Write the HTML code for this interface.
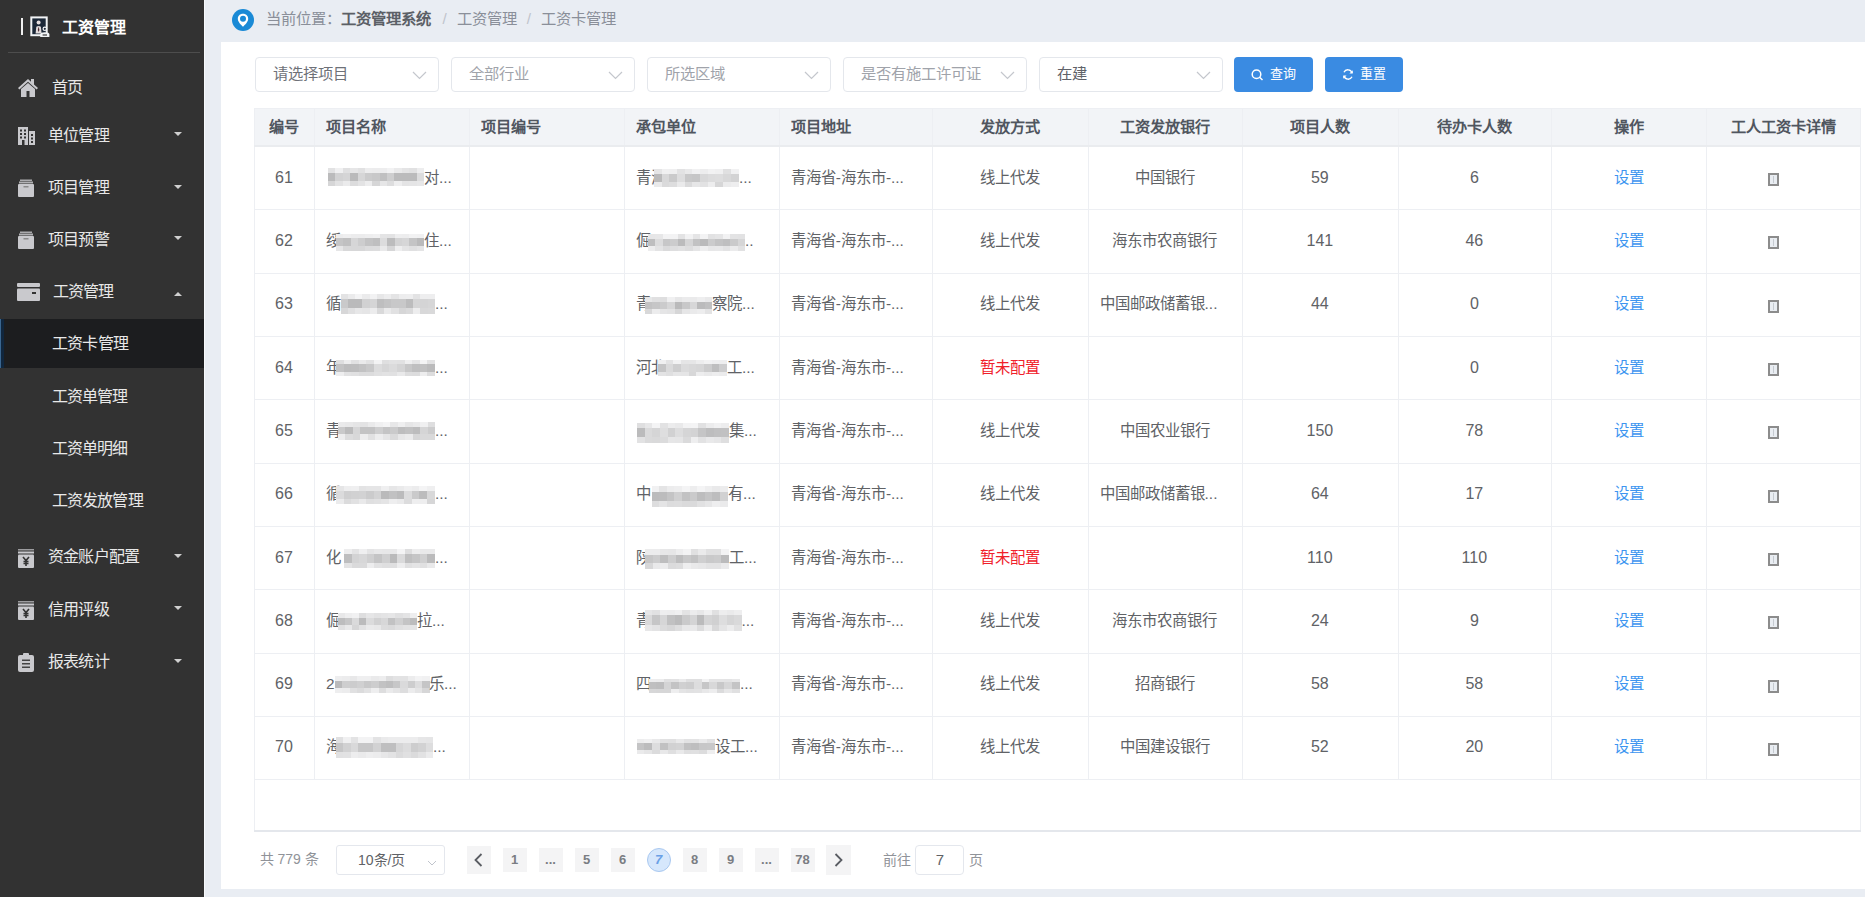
<!DOCTYPE html>
<html lang="zh-CN"><head><meta charset="utf-8"><style>
html,body{margin:0;padding:0}
body{width:1865px;height:897px;overflow:hidden;position:relative;background:#e9edf3;font-family:'Liberation Sans',sans-serif;}
b{font-weight:bold}
</style></head><body>
<div style="position:absolute;left:0;top:0;width:204px;height:897px;background:#323232"><div style="position:absolute;left:21px;top:18px;width:2px;height:17px;background:#f0f0f0"></div><svg style="position:absolute;left:30px;top:16px" width="21" height="21" viewBox="0 0 21 21">
<rect x="1.3" y="1.4" width="15.4" height="17.8" fill="#1c2838" stroke="#f2f4f6" stroke-width="2"/>
<circle cx="8.6" cy="6.6" r="2" fill="#e6dede"/>
<path d="M5.6 17.5 L6.3 10.8 Q8.6 9.2 10.9 10.8 L11.6 17.5 Z" fill="#e2dcdc"/>
<path d="M8.6 10.6 L9.4 14 L8.6 16 L7.8 14 Z" fill="#4a2a30"/>
<path d="M10.2 21 V18.6 Q10.2 16.2 14.8 16.2 Q19.4 16.2 19.4 18.6 V21 Z" fill="#f2f4f6"/>
<circle cx="14.8" cy="12.8" r="2.3" fill="#f2f4f6"/>
<circle cx="14.8" cy="12.8" r="1.1" fill="#1c2838"/>
<rect x="12.6" y="18.4" width="4.4" height="1.2" fill="#3a3a3a"/>
</svg><div style="position:absolute;left:62px;top:17px;height:22px;line-height:22px;font-size:16px;font-weight:bold;color:#fff">工资管理</div><div style="position:absolute;left:8px;top:52px;width:192px;height:1px;background:#4d4d4d"></div><div style="position:absolute;left:0;top:319.4px;width:204px;height:48.6px;background:#1c1d1f"></div><div style="position:absolute;left:0;top:319px;width:3.5px;height:49px;background:#10263d"></div><div style="position:absolute;left:0;top:319px;width:1.2px;height:49px;background:#3a6690"></div><div style="position:absolute;left:17px;top:78px;line-height:0"><svg width="22" height="20" viewBox="0 0 22 20"><path d="M1 10 L11 1 L14 3.7 L14 1 L17 1 L17 6.4 L21 10 L19.6 11.4 L11 3.8 L2.4 11.4 Z" fill="#c9c9cd"/><path d="M4 11 L11 5 L18 11 V19 H12.5 V13 H9.5 V19 H4 Z" fill="#c9c9cd"/></svg></div><div style="position:absolute;left:51.5px;top:77px;height:22px;line-height:22px;font-size:16px;letter-spacing:-0.8px;color:#e8e8e8;white-space:nowrap">首页</div><div style="position:absolute;left:18px;top:127px;line-height:0"><svg width="17" height="18" viewBox="0 0 17 18"><rect x="0" y="0" width="10" height="18" fill="#c9c9cd"/><rect x="11" y="4" width="6" height="14" fill="#c9c9cd"/><g fill="#333"><rect x="2" y="2.5" width="2" height="2"/><rect x="6" y="2.5" width="2" height="2"/><rect x="2" y="6" width="2" height="2"/><rect x="6" y="6" width="2" height="2"/><rect x="2" y="9.5" width="2" height="2"/><rect x="6" y="9.5" width="2" height="2"/><rect x="4" y="13" width="2.5" height="5"/><rect x="13" y="7" width="2" height="2"/><rect x="13" y="10.5" width="2" height="2"/><rect x="13" y="14" width="2" height="2"/></g></svg></div><div style="position:absolute;left:48px;top:124.5px;height:22px;line-height:22px;font-size:16px;letter-spacing:-0.8px;color:#e8e8e8;white-space:nowrap">单位管理</div><div style="position:absolute;left:174px;top:132.0px;width:0;height:0;border-left:4px solid transparent;border-right:4px solid transparent;border-top:4px solid #d0d0d0"></div><div style="position:absolute;left:17px;top:179px;line-height:0"><svg width="18" height="18" viewBox="0 0 18 18"><rect x="3" y="0.5" width="12" height="1.5" fill="#c9c9cd" opacity=".8"/><rect x="2" y="2.5" width="14" height="2" fill="#c9c9cd" opacity=".85"/><rect x="1" y="5" width="16" height="13" rx="1" fill="#c9c9cd"/><rect x="6.5" y="7" width="5" height="1.5" fill="#8a8a8a"/></svg></div><div style="position:absolute;left:48px;top:177px;height:22px;line-height:22px;font-size:16px;letter-spacing:-0.8px;color:#e8e8e8;white-space:nowrap">项目管理</div><div style="position:absolute;left:174px;top:184.5px;width:0;height:0;border-left:4px solid transparent;border-right:4px solid transparent;border-top:4px solid #d0d0d0"></div><div style="position:absolute;left:17px;top:231px;line-height:0"><svg width="18" height="18" viewBox="0 0 18 18"><rect x="3" y="0.5" width="12" height="1.5" fill="#c9c9cd" opacity=".8"/><rect x="2" y="2.5" width="14" height="2" fill="#c9c9cd" opacity=".85"/><rect x="1" y="5" width="16" height="13" rx="1" fill="#c9c9cd"/><rect x="6.5" y="7" width="5" height="1.5" fill="#8a8a8a"/></svg></div><div style="position:absolute;left:48px;top:228.7px;height:22px;line-height:22px;font-size:16px;letter-spacing:-0.8px;color:#e8e8e8;white-space:nowrap">项目预警</div><div style="position:absolute;left:174px;top:236.2px;width:0;height:0;border-left:4px solid transparent;border-right:4px solid transparent;border-top:4px solid #d0d0d0"></div><div style="position:absolute;left:17px;top:283px;line-height:0"><svg width="23" height="18" viewBox="0 0 23 18"><rect x="0" y="0" width="23" height="4" rx="1" fill="#c9c9cd"/><rect x="0" y="5.5" width="23" height="12.5" rx="1" fill="#c9c9cd"/><rect x="15" y="9" width="4" height="2" fill="#333"/></svg></div><div style="position:absolute;left:52.5px;top:281px;height:22px;line-height:22px;font-size:16px;letter-spacing:-0.8px;color:#e8e8e8;white-space:nowrap">工资管理</div><div style="position:absolute;left:174px;top:292px;width:0;height:0;border-left:4px solid transparent;border-right:4px solid transparent;border-bottom:4px solid #d0d0d0"></div><div style="position:absolute;left:52px;top:333px;height:22px;line-height:22px;font-size:16px;letter-spacing:-0.8px;color:#e8e8e8;white-space:nowrap">工资卡管理</div><div style="position:absolute;left:51.5px;top:385.5px;height:22px;line-height:22px;font-size:16px;letter-spacing:-0.8px;color:#e8e8e8;white-space:nowrap">工资单管理</div><div style="position:absolute;left:51.5px;top:437.5px;height:22px;line-height:22px;font-size:16px;letter-spacing:-0.8px;color:#e8e8e8;white-space:nowrap">工资单明细</div><div style="position:absolute;left:51.5px;top:490px;height:22px;line-height:22px;font-size:16px;letter-spacing:-0.8px;color:#e8e8e8;white-space:nowrap">工资发放管理</div><div style="position:absolute;left:17px;top:549px;line-height:0"><svg width="18" height="19" viewBox="0 0 18 19"><rect x="1" y="0" width="16" height="1.5" fill="#c9c9cd" opacity=".7"/><rect x="1" y="2.5" width="16" height="2" fill="#c9c9cd"/><rect x="1" y="5.5" width="16" height="13.5" rx="1" fill="#c9c9cd"/><path d="M6 8 L9 11.5 L12 8 M6.5 12.5 H11.5 M6.5 14.5 H11.5 M9 11.5 V17" stroke="#333" stroke-width="1.6" fill="none"/></svg></div><div style="position:absolute;left:48px;top:546px;height:22px;line-height:22px;font-size:16px;letter-spacing:-0.8px;color:#e8e8e8;white-space:nowrap">资金账户配置</div><div style="position:absolute;left:174px;top:553.5px;width:0;height:0;border-left:4px solid transparent;border-right:4px solid transparent;border-top:4px solid #d0d0d0"></div><div style="position:absolute;left:17px;top:601px;line-height:0"><svg width="18" height="19" viewBox="0 0 18 19"><rect x="1" y="0" width="16" height="1.5" fill="#c9c9cd" opacity=".7"/><rect x="1" y="2.5" width="16" height="2" fill="#c9c9cd"/><rect x="1" y="5.5" width="16" height="13.5" rx="1" fill="#c9c9cd"/><path d="M6 8 L9 11.5 L12 8 M6.5 12.5 H11.5 M6.5 14.5 H11.5 M9 11.5 V17" stroke="#333" stroke-width="1.6" fill="none"/></svg></div><div style="position:absolute;left:48px;top:598.7px;height:22px;line-height:22px;font-size:16px;letter-spacing:-0.8px;color:#e8e8e8;white-space:nowrap">信用评级</div><div style="position:absolute;left:174px;top:606.2px;width:0;height:0;border-left:4px solid transparent;border-right:4px solid transparent;border-top:4px solid #d0d0d0"></div><div style="position:absolute;left:18px;top:653px;line-height:0"><svg width="16" height="19" viewBox="0 0 16 19"><rect x="0" y="2" width="16" height="17" rx="2" fill="#c9c9cd"/><rect x="5" y="0" width="6" height="3" rx="1" fill="#c9c9cd"/><g fill="#444"><rect x="4" y="6.5" width="8" height="1.5"/><rect x="4" y="10" width="8" height="1.5"/><rect x="4" y="13.5" width="8" height="1.5"/></g></svg></div><div style="position:absolute;left:48px;top:651px;height:22px;line-height:22px;font-size:16px;letter-spacing:-0.8px;color:#e8e8e8;white-space:nowrap">报表统计</div><div style="position:absolute;left:174px;top:658.5px;width:0;height:0;border-left:4px solid transparent;border-right:4px solid transparent;border-top:4px solid #d0d0d0"></div></div><div style="position:absolute;left:204px;top:0;width:1px;height:897px;background:#f7f9fb"></div>
<svg style="position:absolute;left:232px;top:9px" width="22" height="22" viewBox="0 0 22 22">
<circle cx="11" cy="11" r="11" fill="#1a8ad6"/>
<path d="M11 4.8 C7.9 4.8 5.8 7 5.8 9.7 C5.8 12.8 9 15.6 11 17.8 C13 15.6 16.2 12.8 16.2 9.7 C16.2 7 14.1 4.8 11 4.8 Z" fill="#fff"/>
<circle cx="11" cy="9.7" r="3" fill="#1a8ad6"/></svg><div style="position:absolute;left:265.5px;top:8px;height:22px;line-height:22px;font-size:15.3px;color:#8a8f99;white-space:nowrap">当前位置：<b style="color:#5b5f66;font-weight:bold">工资管理系统</b><span style="color:#c0c4cc;margin:0 10px 0 12px">/</span>工资管理<span style="color:#c0c4cc;margin:0 10px 0 10px">/</span>工资卡管理</div>
<div style="position:absolute;left:221px;top:41.5px;width:1644px;height:847px;background:#fff"></div>
<div style="position:absolute;left:254.5px;top:56.5px;width:182px;height:33px;border:1px solid #e4e7ec;border-radius:4px;background:#fff"><div style="position:absolute;left:17px;top:5.5px;line-height:22px;font-size:15.3px;color:#6e7178;white-space:nowrap">请选择项目</div><svg style="position:absolute;left:156px;top:13px" width="15" height="9" viewBox="0 0 15 9"><path d="M1 1 L7.5 7.5 L14 1" stroke="#c4c7cd" stroke-width="1.2" fill="none"/></svg></div><div style="position:absolute;left:450.5px;top:56.5px;width:182px;height:33px;border:1px solid #e4e7ec;border-radius:4px;background:#fff"><div style="position:absolute;left:17px;top:5.5px;line-height:22px;font-size:15.3px;color:#a0a3aa;white-space:nowrap">全部行业</div><svg style="position:absolute;left:156px;top:13px" width="15" height="9" viewBox="0 0 15 9"><path d="M1 1 L7.5 7.5 L14 1" stroke="#c4c7cd" stroke-width="1.2" fill="none"/></svg></div><div style="position:absolute;left:646.5px;top:56.5px;width:182px;height:33px;border:1px solid #e4e7ec;border-radius:4px;background:#fff"><div style="position:absolute;left:17px;top:5.5px;line-height:22px;font-size:15.3px;color:#a0a3aa;white-space:nowrap">所选区域</div><svg style="position:absolute;left:156px;top:13px" width="15" height="9" viewBox="0 0 15 9"><path d="M1 1 L7.5 7.5 L14 1" stroke="#c4c7cd" stroke-width="1.2" fill="none"/></svg></div><div style="position:absolute;left:842.5px;top:56.5px;width:182px;height:33px;border:1px solid #e4e7ec;border-radius:4px;background:#fff"><div style="position:absolute;left:17px;top:5.5px;line-height:22px;font-size:15.3px;color:#a0a3aa;white-space:nowrap">是否有施工许可证</div><svg style="position:absolute;left:156px;top:13px" width="15" height="9" viewBox="0 0 15 9"><path d="M1 1 L7.5 7.5 L14 1" stroke="#c4c7cd" stroke-width="1.2" fill="none"/></svg></div><div style="position:absolute;left:1038.5px;top:56.5px;width:182px;height:33px;border:1px solid #e4e7ec;border-radius:4px;background:#fff"><div style="position:absolute;left:17px;top:5.5px;line-height:22px;font-size:15.3px;color:#5f6269;white-space:nowrap">在建</div><svg style="position:absolute;left:156px;top:13px" width="15" height="9" viewBox="0 0 15 9"><path d="M1 1 L7.5 7.5 L14 1" stroke="#c4c7cd" stroke-width="1.2" fill="none"/></svg></div>
<div style="position:absolute;left:1234.3px;top:56.8px;width:78.7px;height:34.8px;border-radius:4px;background:#3a8be2"><svg style="position:absolute;left:17px;top:12.5px" width="13" height="12" viewBox="0 0 13 12"><circle cx="5.5" cy="5.2" r="4.3" stroke="#fff" stroke-width="1.5" fill="none"/><path d="M8.6 8.3 L11.5 11" stroke="#fff" stroke-width="1.5"/></svg><div style="position:absolute;left:36px;top:6px;line-height:22px;font-size:13px;color:#fff;white-space:nowrap">查询</div></div><div style="position:absolute;left:1324.6px;top:56.8px;width:78.2px;height:34.8px;border-radius:4px;background:#3a8be2"><svg style="position:absolute;left:17.5px;top:12.5px" width="12" height="11" viewBox="0 0 12 11"><path d="M10 4 A4.3 4.3 0 0 0 2 3.2 M2 7 A4.3 4.3 0 0 0 10 7.8" stroke="#fff" stroke-width="1.4" fill="none"/><path d="M10.8 1.2 V4.6 H7.4 Z M1.2 9.8 V6.4 H4.6 Z" fill="#fff"/></svg><div style="position:absolute;left:35px;top:6px;line-height:22px;font-size:13px;color:#fff;white-space:nowrap">重置</div></div>
<div style="position:absolute;left:254px;top:107.5px;width:1606px;height:37.099999999999994px;background:#f2f4f7"></div><div style="position:absolute;left:254px;top:107.5px;width:1606px;height:1px;background:#edeff3"></div><div style="position:absolute;left:254px;top:830px;width:1607px;height:1.5px;background:#e4e7ec"></div><div style="position:absolute;left:254px;top:107.5px;width:1px;height:722.5px;background:#edeff3"></div><div style="position:absolute;left:314px;top:107.5px;width:1px;height:671.6px;background:#edeff3"></div><div style="position:absolute;left:468.5px;top:107.5px;width:1px;height:671.6px;background:#edeff3"></div><div style="position:absolute;left:624px;top:107.5px;width:1px;height:671.6px;background:#edeff3"></div><div style="position:absolute;left:778.8px;top:107.5px;width:1px;height:671.6px;background:#edeff3"></div><div style="position:absolute;left:932px;top:107.5px;width:1px;height:671.6px;background:#edeff3"></div><div style="position:absolute;left:1087.6px;top:107.5px;width:1px;height:671.6px;background:#edeff3"></div><div style="position:absolute;left:1242px;top:107.5px;width:1px;height:671.6px;background:#edeff3"></div><div style="position:absolute;left:1397.7px;top:107.5px;width:1px;height:671.6px;background:#edeff3"></div><div style="position:absolute;left:1551px;top:107.5px;width:1px;height:671.6px;background:#edeff3"></div><div style="position:absolute;left:1706px;top:107.5px;width:1px;height:671.6px;background:#edeff3"></div><div style="position:absolute;left:1860px;top:107.5px;width:1px;height:722.5px;background:#edeff3"></div><div style="position:absolute;left:254px;top:144.6px;width:1606px;height:2px;background:#eaecef"></div><div style="position:absolute;left:254px;top:209.39999999999998px;width:1606px;height:1px;background:#edeff3"></div><div style="position:absolute;left:254px;top:272.7px;width:1606px;height:1px;background:#edeff3"></div><div style="position:absolute;left:254px;top:336.0px;width:1606px;height:1px;background:#edeff3"></div><div style="position:absolute;left:254px;top:399.29999999999995px;width:1606px;height:1px;background:#edeff3"></div><div style="position:absolute;left:254px;top:462.6px;width:1606px;height:1px;background:#edeff3"></div><div style="position:absolute;left:254px;top:525.9px;width:1606px;height:1px;background:#edeff3"></div><div style="position:absolute;left:254px;top:589.1999999999999px;width:1606px;height:1px;background:#edeff3"></div><div style="position:absolute;left:254px;top:652.5px;width:1606px;height:1px;background:#edeff3"></div><div style="position:absolute;left:254px;top:715.8px;width:1606px;height:1px;background:#edeff3"></div><div style="position:absolute;left:254px;top:779.1px;width:1606px;height:1px;background:#edeff3"></div><div style="position:absolute;left:254px;width:60px;text-align:center;top:115.8px;height:22px;line-height:22px;font-size:15.2px;color:#50565f;white-space:nowrap;font-weight:bold;">编号</div><div style="position:absolute;left:326px;width:142.5px;text-align:left;top:115.8px;height:22px;line-height:22px;font-size:15.2px;color:#50565f;white-space:nowrap;font-weight:bold;">项目名称</div><div style="position:absolute;left:480.5px;width:143.5px;text-align:left;top:115.8px;height:22px;line-height:22px;font-size:15.2px;color:#50565f;white-space:nowrap;font-weight:bold;">项目编号</div><div style="position:absolute;left:636px;width:142.79999999999995px;text-align:left;top:115.8px;height:22px;line-height:22px;font-size:15.2px;color:#50565f;white-space:nowrap;font-weight:bold;">承包单位</div><div style="position:absolute;left:790.8px;width:141.20000000000005px;text-align:left;top:115.8px;height:22px;line-height:22px;font-size:15.2px;color:#50565f;white-space:nowrap;font-weight:bold;">项目地址</div><div style="position:absolute;left:932px;width:155.5999999999999px;text-align:center;top:115.8px;height:22px;line-height:22px;font-size:15.2px;color:#50565f;white-space:nowrap;font-weight:bold;">发放方式</div><div style="position:absolute;left:1087.6px;width:154.4000000000001px;text-align:center;top:115.8px;height:22px;line-height:22px;font-size:15.2px;color:#50565f;white-space:nowrap;font-weight:bold;">工资发放银行</div><div style="position:absolute;left:1242px;width:155.70000000000005px;text-align:center;top:115.8px;height:22px;line-height:22px;font-size:15.2px;color:#50565f;white-space:nowrap;font-weight:bold;">项目人数</div><div style="position:absolute;left:1397.7px;width:153.29999999999995px;text-align:center;top:115.8px;height:22px;line-height:22px;font-size:15.2px;color:#50565f;white-space:nowrap;font-weight:bold;">待办卡人数</div><div style="position:absolute;left:1551px;width:155px;text-align:center;top:115.8px;height:22px;line-height:22px;font-size:15.2px;color:#50565f;white-space:nowrap;font-weight:bold;">操作</div><div style="position:absolute;left:1706px;width:154px;text-align:center;top:115.8px;height:22px;line-height:22px;font-size:15.2px;color:#50565f;white-space:nowrap;font-weight:bold;">工人工资卡详情</div><div style="position:absolute;left:254px;width:60px;text-align:center;top:166.75px;height:22px;line-height:22px;font-size:16px;color:#606266;white-space:nowrap;">61</div><div style="position:absolute;left:328.00px;top:167.50px;width:7.68px;height:5.48px;background:rgb(226,226,227)"></div><div style="position:absolute;left:335.38px;top:167.50px;width:7.68px;height:5.48px;background:rgb(240,240,241)"></div><div style="position:absolute;left:342.77px;top:167.50px;width:7.68px;height:5.48px;background:rgb(224,224,225)"></div><div style="position:absolute;left:350.15px;top:167.50px;width:7.68px;height:5.48px;background:rgb(230,230,231)"></div><div style="position:absolute;left:357.54px;top:167.50px;width:7.68px;height:5.48px;background:rgb(225,225,226)"></div><div style="position:absolute;left:364.92px;top:167.50px;width:7.68px;height:5.48px;background:rgb(237,237,238)"></div><div style="position:absolute;left:372.31px;top:167.50px;width:7.68px;height:5.48px;background:rgb(236,236,237)"></div><div style="position:absolute;left:379.69px;top:167.50px;width:7.68px;height:5.48px;background:rgb(237,237,238)"></div><div style="position:absolute;left:387.08px;top:167.50px;width:7.68px;height:5.48px;background:rgb(242,242,243)"></div><div style="position:absolute;left:394.46px;top:167.50px;width:7.68px;height:5.48px;background:rgb(234,234,235)"></div><div style="position:absolute;left:401.85px;top:167.50px;width:7.68px;height:5.48px;background:rgb(228,228,229)"></div><div style="position:absolute;left:409.23px;top:167.50px;width:7.68px;height:5.48px;background:rgb(225,225,226)"></div><div style="position:absolute;left:416.62px;top:167.50px;width:7.68px;height:5.48px;background:rgb(237,237,238)"></div><div style="position:absolute;left:328.00px;top:172.68px;width:7.68px;height:8.44px;background:rgb(187,187,188)"></div><div style="position:absolute;left:335.38px;top:172.68px;width:7.68px;height:8.44px;background:rgb(210,210,211)"></div><div style="position:absolute;left:342.77px;top:172.68px;width:7.68px;height:8.44px;background:rgb(213,213,214)"></div><div style="position:absolute;left:350.15px;top:172.68px;width:7.68px;height:8.44px;background:rgb(186,186,187)"></div><div style="position:absolute;left:357.54px;top:172.68px;width:7.68px;height:8.44px;background:rgb(214,214,215)"></div><div style="position:absolute;left:364.92px;top:172.68px;width:7.68px;height:8.44px;background:rgb(203,203,204)"></div><div style="position:absolute;left:372.31px;top:172.68px;width:7.68px;height:8.44px;background:rgb(200,200,201)"></div><div style="position:absolute;left:379.69px;top:172.68px;width:7.68px;height:8.44px;background:rgb(192,192,193)"></div><div style="position:absolute;left:387.08px;top:172.68px;width:7.68px;height:8.44px;background:rgb(206,206,207)"></div><div style="position:absolute;left:394.46px;top:172.68px;width:7.68px;height:8.44px;background:rgb(187,187,188)"></div><div style="position:absolute;left:401.85px;top:172.68px;width:7.68px;height:8.44px;background:rgb(187,187,188)"></div><div style="position:absolute;left:409.23px;top:172.68px;width:7.68px;height:8.44px;background:rgb(187,187,188)"></div><div style="position:absolute;left:416.62px;top:172.68px;width:7.68px;height:8.44px;background:rgb(220,220,221)"></div><div style="position:absolute;left:328.00px;top:180.82px;width:7.68px;height:5.48px;background:rgb(214,214,215)"></div><div style="position:absolute;left:335.38px;top:180.82px;width:7.68px;height:5.48px;background:rgb(226,226,227)"></div><div style="position:absolute;left:342.77px;top:180.82px;width:7.68px;height:5.48px;background:rgb(235,235,236)"></div><div style="position:absolute;left:350.15px;top:180.82px;width:7.68px;height:5.48px;background:rgb(220,220,221)"></div><div style="position:absolute;left:357.54px;top:180.82px;width:7.68px;height:5.48px;background:rgb(227,227,228)"></div><div style="position:absolute;left:364.92px;top:180.82px;width:7.68px;height:5.48px;background:rgb(237,237,238)"></div><div style="position:absolute;left:372.31px;top:180.82px;width:7.68px;height:5.48px;background:rgb(214,214,215)"></div><div style="position:absolute;left:379.69px;top:180.82px;width:7.68px;height:5.48px;background:rgb(230,230,231)"></div><div style="position:absolute;left:387.08px;top:180.82px;width:7.68px;height:5.48px;background:rgb(221,221,222)"></div><div style="position:absolute;left:394.46px;top:180.82px;width:7.68px;height:5.48px;background:rgb(238,238,239)"></div><div style="position:absolute;left:401.85px;top:180.82px;width:7.68px;height:5.48px;background:rgb(228,228,229)"></div><div style="position:absolute;left:409.23px;top:180.82px;width:7.68px;height:5.48px;background:rgb(229,229,230)"></div><div style="position:absolute;left:416.62px;top:180.82px;width:7.68px;height:5.48px;background:rgb(231,231,232)"></div><div style="position:absolute;left:424px;top:166.75px;height:22px;line-height:22px;font-size:15.4px;color:#606266;white-space:nowrap">对...</div><div style="position:absolute;left:636px;top:166.75px;height:22px;line-height:22px;font-size:15.4px;color:#606266;white-space:nowrap">青海</div><div style="position:absolute;left:654.00px;top:169.00px;width:7.98px;height:5.20px;background:rgb(229,229,230)"></div><div style="position:absolute;left:661.68px;top:169.00px;width:7.98px;height:5.20px;background:rgb(240,240,241)"></div><div style="position:absolute;left:669.36px;top:169.00px;width:7.98px;height:5.20px;background:rgb(239,239,240)"></div><div style="position:absolute;left:677.05px;top:169.00px;width:7.98px;height:5.20px;background:rgb(226,226,227)"></div><div style="position:absolute;left:684.73px;top:169.00px;width:7.98px;height:5.20px;background:rgb(233,233,234)"></div><div style="position:absolute;left:692.41px;top:169.00px;width:7.98px;height:5.20px;background:rgb(241,241,242)"></div><div style="position:absolute;left:700.09px;top:169.00px;width:7.98px;height:5.20px;background:rgb(237,237,238)"></div><div style="position:absolute;left:707.77px;top:169.00px;width:7.98px;height:5.20px;background:rgb(242,242,243)"></div><div style="position:absolute;left:715.45px;top:169.00px;width:7.98px;height:5.20px;background:rgb(240,240,241)"></div><div style="position:absolute;left:723.14px;top:169.00px;width:7.98px;height:5.20px;background:rgb(224,224,225)"></div><div style="position:absolute;left:730.82px;top:169.00px;width:7.98px;height:5.20px;background:rgb(241,241,242)"></div><div style="position:absolute;left:654.00px;top:173.90px;width:7.98px;height:8.00px;background:rgb(186,186,187)"></div><div style="position:absolute;left:661.68px;top:173.90px;width:7.98px;height:8.00px;background:rgb(216,216,217)"></div><div style="position:absolute;left:669.36px;top:173.90px;width:7.98px;height:8.00px;background:rgb(202,202,203)"></div><div style="position:absolute;left:677.05px;top:173.90px;width:7.98px;height:8.00px;background:rgb(221,221,222)"></div><div style="position:absolute;left:684.73px;top:173.90px;width:7.98px;height:8.00px;background:rgb(200,200,201)"></div><div style="position:absolute;left:692.41px;top:173.90px;width:7.98px;height:8.00px;background:rgb(198,198,199)"></div><div style="position:absolute;left:700.09px;top:173.90px;width:7.98px;height:8.00px;background:rgb(216,216,217)"></div><div style="position:absolute;left:707.77px;top:173.90px;width:7.98px;height:8.00px;background:rgb(220,220,221)"></div><div style="position:absolute;left:715.45px;top:173.90px;width:7.98px;height:8.00px;background:rgb(221,221,222)"></div><div style="position:absolute;left:723.14px;top:173.90px;width:7.98px;height:8.00px;background:rgb(216,216,217)"></div><div style="position:absolute;left:730.82px;top:173.90px;width:7.98px;height:8.00px;background:rgb(211,211,212)"></div><div style="position:absolute;left:654.00px;top:181.60px;width:7.98px;height:5.20px;background:rgb(234,234,235)"></div><div style="position:absolute;left:661.68px;top:181.60px;width:7.98px;height:5.20px;background:rgb(218,218,219)"></div><div style="position:absolute;left:669.36px;top:181.60px;width:7.98px;height:5.20px;background:rgb(221,221,222)"></div><div style="position:absolute;left:677.05px;top:181.60px;width:7.98px;height:5.20px;background:rgb(234,234,235)"></div><div style="position:absolute;left:684.73px;top:181.60px;width:7.98px;height:5.20px;background:rgb(218,218,219)"></div><div style="position:absolute;left:692.41px;top:181.60px;width:7.98px;height:5.20px;background:rgb(230,230,231)"></div><div style="position:absolute;left:700.09px;top:181.60px;width:7.98px;height:5.20px;background:rgb(226,226,227)"></div><div style="position:absolute;left:707.77px;top:181.60px;width:7.98px;height:5.20px;background:rgb(237,237,238)"></div><div style="position:absolute;left:715.45px;top:181.60px;width:7.98px;height:5.20px;background:rgb(214,214,215)"></div><div style="position:absolute;left:723.14px;top:181.60px;width:7.98px;height:5.20px;background:rgb(235,235,236)"></div><div style="position:absolute;left:730.82px;top:181.60px;width:7.98px;height:5.20px;background:rgb(238,238,239)"></div><div style="position:absolute;left:739px;top:166.75px;height:22px;line-height:22px;font-size:15.4px;color:#606266;white-space:nowrap">...</div><div style="position:absolute;left:790.8px;width:141.20000000000005px;text-align:left;top:166.75px;height:22px;line-height:22px;font-size:15.4px;color:#606266;white-space:nowrap;">青海省-海东市-...</div><div style="position:absolute;left:932px;width:155.5999999999999px;text-align:center;top:166.75px;height:22px;line-height:22px;font-size:15.4px;color:#606266;white-space:nowrap;">线上代发</div><div style="position:absolute;left:1087.6px;width:154.4000000000001px;text-align:center;top:166.75px;height:22px;line-height:22px;font-size:15.4px;color:#606266;white-space:nowrap;">中国银行</div><div style="position:absolute;left:1242px;width:155.70000000000005px;text-align:center;top:166.75px;height:22px;line-height:22px;font-size:16px;color:#606266;white-space:nowrap;">59</div><div style="position:absolute;left:1397.7px;width:153.29999999999995px;text-align:center;top:166.75px;height:22px;line-height:22px;font-size:16px;color:#606266;white-space:nowrap;">6</div><div style="position:absolute;left:1551px;width:155px;text-align:center;top:166.75px;height:22px;line-height:22px;font-size:15.4px;color:#3d95f0;white-space:nowrap;">设置</div><div style="position:absolute;left:1767.9px;top:173.15px;width:7px;height:9px;border:2px solid #8c8c8c;background:#e9edf2"><div style="position:absolute;left:3px;top:1px;width:1px;height:7px;background:#c5cad0"></div></div><div style="position:absolute;left:254px;width:60px;text-align:center;top:230.04999999999998px;height:22px;line-height:22px;font-size:16px;color:#606266;white-space:nowrap;">62</div><div style="position:absolute;left:326px;top:230.04999999999998px;height:22px;line-height:22px;font-size:15.4px;color:#606266;white-space:nowrap">绥</div><div style="position:absolute;left:336.00px;top:233.50px;width:7.63px;height:5.20px;background:rgb(236,236,237)"></div><div style="position:absolute;left:343.33px;top:233.50px;width:7.63px;height:5.20px;background:rgb(239,239,240)"></div><div style="position:absolute;left:350.67px;top:233.50px;width:7.63px;height:5.20px;background:rgb(236,236,237)"></div><div style="position:absolute;left:358.00px;top:233.50px;width:7.63px;height:5.20px;background:rgb(236,236,237)"></div><div style="position:absolute;left:365.33px;top:233.50px;width:7.63px;height:5.20px;background:rgb(238,238,239)"></div><div style="position:absolute;left:372.67px;top:233.50px;width:7.63px;height:5.20px;background:rgb(240,240,241)"></div><div style="position:absolute;left:380.00px;top:233.50px;width:7.63px;height:5.20px;background:rgb(228,228,229)"></div><div style="position:absolute;left:387.33px;top:233.50px;width:7.63px;height:5.20px;background:rgb(227,227,228)"></div><div style="position:absolute;left:394.67px;top:233.50px;width:7.63px;height:5.20px;background:rgb(238,238,239)"></div><div style="position:absolute;left:402.00px;top:233.50px;width:7.63px;height:5.20px;background:rgb(237,237,238)"></div><div style="position:absolute;left:409.33px;top:233.50px;width:7.63px;height:5.20px;background:rgb(242,242,243)"></div><div style="position:absolute;left:416.67px;top:233.50px;width:7.63px;height:5.20px;background:rgb(241,241,242)"></div><div style="position:absolute;left:336.00px;top:238.40px;width:7.63px;height:8.00px;background:rgb(197,197,198)"></div><div style="position:absolute;left:343.33px;top:238.40px;width:7.63px;height:8.00px;background:rgb(192,192,193)"></div><div style="position:absolute;left:350.67px;top:238.40px;width:7.63px;height:8.00px;background:rgb(214,214,215)"></div><div style="position:absolute;left:358.00px;top:238.40px;width:7.63px;height:8.00px;background:rgb(205,205,206)"></div><div style="position:absolute;left:365.33px;top:238.40px;width:7.63px;height:8.00px;background:rgb(195,195,196)"></div><div style="position:absolute;left:372.67px;top:238.40px;width:7.63px;height:8.00px;background:rgb(191,191,192)"></div><div style="position:absolute;left:380.00px;top:238.40px;width:7.63px;height:8.00px;background:rgb(220,220,221)"></div><div style="position:absolute;left:387.33px;top:238.40px;width:7.63px;height:8.00px;background:rgb(188,188,189)"></div><div style="position:absolute;left:394.67px;top:238.40px;width:7.63px;height:8.00px;background:rgb(211,211,212)"></div><div style="position:absolute;left:402.00px;top:238.40px;width:7.63px;height:8.00px;background:rgb(214,214,215)"></div><div style="position:absolute;left:409.33px;top:238.40px;width:7.63px;height:8.00px;background:rgb(196,196,197)"></div><div style="position:absolute;left:416.67px;top:238.40px;width:7.63px;height:8.00px;background:rgb(186,186,187)"></div><div style="position:absolute;left:336.00px;top:246.10px;width:7.63px;height:5.20px;background:rgb(230,230,231)"></div><div style="position:absolute;left:343.33px;top:246.10px;width:7.63px;height:5.20px;background:rgb(216,216,217)"></div><div style="position:absolute;left:350.67px;top:246.10px;width:7.63px;height:5.20px;background:rgb(215,215,216)"></div><div style="position:absolute;left:358.00px;top:246.10px;width:7.63px;height:5.20px;background:rgb(215,215,216)"></div><div style="position:absolute;left:365.33px;top:246.10px;width:7.63px;height:5.20px;background:rgb(220,220,221)"></div><div style="position:absolute;left:372.67px;top:246.10px;width:7.63px;height:5.20px;background:rgb(221,221,222)"></div><div style="position:absolute;left:380.00px;top:246.10px;width:7.63px;height:5.20px;background:rgb(233,233,234)"></div><div style="position:absolute;left:387.33px;top:246.10px;width:7.63px;height:5.20px;background:rgb(214,214,215)"></div><div style="position:absolute;left:394.67px;top:246.10px;width:7.63px;height:5.20px;background:rgb(238,238,239)"></div><div style="position:absolute;left:402.00px;top:246.10px;width:7.63px;height:5.20px;background:rgb(228,228,229)"></div><div style="position:absolute;left:409.33px;top:246.10px;width:7.63px;height:5.20px;background:rgb(224,224,225)"></div><div style="position:absolute;left:416.67px;top:246.10px;width:7.63px;height:5.20px;background:rgb(228,228,229)"></div><div style="position:absolute;left:424px;top:230.04999999999998px;height:22px;line-height:22px;font-size:15.4px;color:#606266;white-space:nowrap">住...</div><div style="position:absolute;left:636px;top:230.04999999999998px;height:22px;line-height:22px;font-size:15.4px;color:#606266;white-space:nowrap">倔</div><div style="position:absolute;left:647.50px;top:234.00px;width:7.80px;height:5.06px;background:rgb(230,230,231)"></div><div style="position:absolute;left:655.00px;top:234.00px;width:7.80px;height:5.06px;background:rgb(231,231,232)"></div><div style="position:absolute;left:662.50px;top:234.00px;width:7.80px;height:5.06px;background:rgb(243,243,244)"></div><div style="position:absolute;left:670.00px;top:234.00px;width:7.80px;height:5.06px;background:rgb(243,243,244)"></div><div style="position:absolute;left:677.50px;top:234.00px;width:7.80px;height:5.06px;background:rgb(227,227,228)"></div><div style="position:absolute;left:685.00px;top:234.00px;width:7.80px;height:5.06px;background:rgb(242,242,243)"></div><div style="position:absolute;left:692.50px;top:234.00px;width:7.80px;height:5.06px;background:rgb(229,229,230)"></div><div style="position:absolute;left:700.00px;top:234.00px;width:7.80px;height:5.06px;background:rgb(243,243,244)"></div><div style="position:absolute;left:707.50px;top:234.00px;width:7.80px;height:5.06px;background:rgb(226,226,227)"></div><div style="position:absolute;left:715.00px;top:234.00px;width:7.80px;height:5.06px;background:rgb(229,229,230)"></div><div style="position:absolute;left:722.50px;top:234.00px;width:7.80px;height:5.06px;background:rgb(242,242,243)"></div><div style="position:absolute;left:730.00px;top:234.00px;width:7.80px;height:5.06px;background:rgb(227,227,228)"></div><div style="position:absolute;left:737.50px;top:234.00px;width:7.80px;height:5.06px;background:rgb(226,226,227)"></div><div style="position:absolute;left:647.50px;top:238.76px;width:7.80px;height:7.78px;background:rgb(190,190,191)"></div><div style="position:absolute;left:655.00px;top:238.76px;width:7.80px;height:7.78px;background:rgb(220,220,221)"></div><div style="position:absolute;left:662.50px;top:238.76px;width:7.80px;height:7.78px;background:rgb(199,199,200)"></div><div style="position:absolute;left:670.00px;top:238.76px;width:7.80px;height:7.78px;background:rgb(204,204,205)"></div><div style="position:absolute;left:677.50px;top:238.76px;width:7.80px;height:7.78px;background:rgb(187,187,188)"></div><div style="position:absolute;left:685.00px;top:238.76px;width:7.80px;height:7.78px;background:rgb(213,213,214)"></div><div style="position:absolute;left:692.50px;top:238.76px;width:7.80px;height:7.78px;background:rgb(194,194,195)"></div><div style="position:absolute;left:700.00px;top:238.76px;width:7.80px;height:7.78px;background:rgb(186,186,187)"></div><div style="position:absolute;left:707.50px;top:238.76px;width:7.80px;height:7.78px;background:rgb(203,203,204)"></div><div style="position:absolute;left:715.00px;top:238.76px;width:7.80px;height:7.78px;background:rgb(195,195,196)"></div><div style="position:absolute;left:722.50px;top:238.76px;width:7.80px;height:7.78px;background:rgb(191,191,192)"></div><div style="position:absolute;left:730.00px;top:238.76px;width:7.80px;height:7.78px;background:rgb(202,202,203)"></div><div style="position:absolute;left:737.50px;top:238.76px;width:7.80px;height:7.78px;background:rgb(214,214,215)"></div><div style="position:absolute;left:647.50px;top:246.24px;width:7.80px;height:5.06px;background:rgb(237,237,238)"></div><div style="position:absolute;left:655.00px;top:246.24px;width:7.80px;height:5.06px;background:rgb(227,227,228)"></div><div style="position:absolute;left:662.50px;top:246.24px;width:7.80px;height:5.06px;background:rgb(218,218,219)"></div><div style="position:absolute;left:670.00px;top:246.24px;width:7.80px;height:5.06px;background:rgb(222,222,223)"></div><div style="position:absolute;left:677.50px;top:246.24px;width:7.80px;height:5.06px;background:rgb(225,225,226)"></div><div style="position:absolute;left:685.00px;top:246.24px;width:7.80px;height:5.06px;background:rgb(221,221,222)"></div><div style="position:absolute;left:692.50px;top:246.24px;width:7.80px;height:5.06px;background:rgb(229,229,230)"></div><div style="position:absolute;left:700.00px;top:246.24px;width:7.80px;height:5.06px;background:rgb(238,238,239)"></div><div style="position:absolute;left:707.50px;top:246.24px;width:7.80px;height:5.06px;background:rgb(231,231,232)"></div><div style="position:absolute;left:715.00px;top:246.24px;width:7.80px;height:5.06px;background:rgb(232,232,233)"></div><div style="position:absolute;left:722.50px;top:246.24px;width:7.80px;height:5.06px;background:rgb(227,227,228)"></div><div style="position:absolute;left:730.00px;top:246.24px;width:7.80px;height:5.06px;background:rgb(235,235,236)"></div><div style="position:absolute;left:737.50px;top:246.24px;width:7.80px;height:5.06px;background:rgb(225,225,226)"></div><div style="position:absolute;left:745px;top:230.04999999999998px;height:22px;line-height:22px;font-size:15.4px;color:#606266;white-space:nowrap">..</div><div style="position:absolute;left:790.8px;width:141.20000000000005px;text-align:left;top:230.04999999999998px;height:22px;line-height:22px;font-size:15.4px;color:#606266;white-space:nowrap;">青海省-海东市-...</div><div style="position:absolute;left:932px;width:155.5999999999999px;text-align:center;top:230.04999999999998px;height:22px;line-height:22px;font-size:15.4px;color:#606266;white-space:nowrap;">线上代发</div><div style="position:absolute;left:1087.6px;width:154.4000000000001px;text-align:center;top:230.04999999999998px;height:22px;line-height:22px;font-size:15.4px;color:#606266;white-space:nowrap;">海东市农商银行</div><div style="position:absolute;left:1242px;width:155.70000000000005px;text-align:center;top:230.04999999999998px;height:22px;line-height:22px;font-size:16px;color:#606266;white-space:nowrap;">141</div><div style="position:absolute;left:1397.7px;width:153.29999999999995px;text-align:center;top:230.04999999999998px;height:22px;line-height:22px;font-size:16px;color:#606266;white-space:nowrap;">46</div><div style="position:absolute;left:1551px;width:155px;text-align:center;top:230.04999999999998px;height:22px;line-height:22px;font-size:15.4px;color:#3d95f0;white-space:nowrap;">设置</div><div style="position:absolute;left:1767.9px;top:236.45px;width:7px;height:9px;border:2px solid #8c8c8c;background:#e9edf2"><div style="position:absolute;left:3px;top:1px;width:1px;height:7px;background:#c5cad0"></div></div><div style="position:absolute;left:254px;width:60px;text-align:center;top:293.34999999999997px;height:22px;line-height:22px;font-size:16px;color:#606266;white-space:nowrap;">63</div><div style="position:absolute;left:326px;top:293.34999999999997px;height:22px;line-height:22px;font-size:15.4px;color:#606266;white-space:nowrap">循</div><div style="position:absolute;left:340.50px;top:293.50px;width:7.57px;height:6.04px;background:rgb(227,227,228)"></div><div style="position:absolute;left:347.77px;top:293.50px;width:7.57px;height:6.04px;background:rgb(235,235,236)"></div><div style="position:absolute;left:355.04px;top:293.50px;width:7.57px;height:6.04px;background:rgb(244,244,245)"></div><div style="position:absolute;left:362.31px;top:293.50px;width:7.57px;height:6.04px;background:rgb(235,235,236)"></div><div style="position:absolute;left:369.58px;top:293.50px;width:7.57px;height:6.04px;background:rgb(242,242,243)"></div><div style="position:absolute;left:376.85px;top:293.50px;width:7.57px;height:6.04px;background:rgb(231,231,232)"></div><div style="position:absolute;left:384.12px;top:293.50px;width:7.57px;height:6.04px;background:rgb(237,237,238)"></div><div style="position:absolute;left:391.38px;top:293.50px;width:7.57px;height:6.04px;background:rgb(228,228,229)"></div><div style="position:absolute;left:398.65px;top:293.50px;width:7.57px;height:6.04px;background:rgb(237,237,238)"></div><div style="position:absolute;left:405.92px;top:293.50px;width:7.57px;height:6.04px;background:rgb(238,238,239)"></div><div style="position:absolute;left:413.19px;top:293.50px;width:7.57px;height:6.04px;background:rgb(227,227,228)"></div><div style="position:absolute;left:420.46px;top:293.50px;width:7.57px;height:6.04px;background:rgb(238,238,239)"></div><div style="position:absolute;left:427.73px;top:293.50px;width:7.57px;height:6.04px;background:rgb(238,238,239)"></div><div style="position:absolute;left:340.50px;top:299.24px;width:7.57px;height:9.32px;background:rgb(201,201,202)"></div><div style="position:absolute;left:347.77px;top:299.24px;width:7.57px;height:9.32px;background:rgb(186,186,187)"></div><div style="position:absolute;left:355.04px;top:299.24px;width:7.57px;height:9.32px;background:rgb(186,186,187)"></div><div style="position:absolute;left:362.31px;top:299.24px;width:7.57px;height:9.32px;background:rgb(209,209,210)"></div><div style="position:absolute;left:369.58px;top:299.24px;width:7.57px;height:9.32px;background:rgb(213,213,214)"></div><div style="position:absolute;left:376.85px;top:299.24px;width:7.57px;height:9.32px;background:rgb(190,190,191)"></div><div style="position:absolute;left:384.12px;top:299.24px;width:7.57px;height:9.32px;background:rgb(195,195,196)"></div><div style="position:absolute;left:391.38px;top:299.24px;width:7.57px;height:9.32px;background:rgb(200,200,201)"></div><div style="position:absolute;left:398.65px;top:299.24px;width:7.57px;height:9.32px;background:rgb(200,200,201)"></div><div style="position:absolute;left:405.92px;top:299.24px;width:7.57px;height:9.32px;background:rgb(188,188,189)"></div><div style="position:absolute;left:413.19px;top:299.24px;width:7.57px;height:9.32px;background:rgb(213,213,214)"></div><div style="position:absolute;left:420.46px;top:299.24px;width:7.57px;height:9.32px;background:rgb(212,212,213)"></div><div style="position:absolute;left:427.73px;top:299.24px;width:7.57px;height:9.32px;background:rgb(214,214,215)"></div><div style="position:absolute;left:340.50px;top:308.26px;width:7.57px;height:6.04px;background:rgb(215,215,216)"></div><div style="position:absolute;left:347.77px;top:308.26px;width:7.57px;height:6.04px;background:rgb(224,224,225)"></div><div style="position:absolute;left:355.04px;top:308.26px;width:7.57px;height:6.04px;background:rgb(231,231,232)"></div><div style="position:absolute;left:362.31px;top:308.26px;width:7.57px;height:6.04px;background:rgb(229,229,230)"></div><div style="position:absolute;left:369.58px;top:308.26px;width:7.57px;height:6.04px;background:rgb(236,236,237)"></div><div style="position:absolute;left:376.85px;top:308.26px;width:7.57px;height:6.04px;background:rgb(217,217,218)"></div><div style="position:absolute;left:384.12px;top:308.26px;width:7.57px;height:6.04px;background:rgb(234,234,235)"></div><div style="position:absolute;left:391.38px;top:308.26px;width:7.57px;height:6.04px;background:rgb(225,225,226)"></div><div style="position:absolute;left:398.65px;top:308.26px;width:7.57px;height:6.04px;background:rgb(214,214,215)"></div><div style="position:absolute;left:405.92px;top:308.26px;width:7.57px;height:6.04px;background:rgb(218,218,219)"></div><div style="position:absolute;left:413.19px;top:308.26px;width:7.57px;height:6.04px;background:rgb(237,237,238)"></div><div style="position:absolute;left:420.46px;top:308.26px;width:7.57px;height:6.04px;background:rgb(216,216,217)"></div><div style="position:absolute;left:427.73px;top:308.26px;width:7.57px;height:6.04px;background:rgb(217,217,218)"></div><div style="position:absolute;left:435px;top:293.34999999999997px;height:22px;line-height:22px;font-size:15.4px;color:#606266;white-space:nowrap">...</div><div style="position:absolute;left:636px;top:293.34999999999997px;height:22px;line-height:22px;font-size:15.4px;color:#606266;white-space:nowrap">青</div><div style="position:absolute;left:645.00px;top:297.00px;width:7.74px;height:5.06px;background:rgb(231,231,232)"></div><div style="position:absolute;left:652.44px;top:297.00px;width:7.74px;height:5.06px;background:rgb(224,224,225)"></div><div style="position:absolute;left:659.89px;top:297.00px;width:7.74px;height:5.06px;background:rgb(222,222,223)"></div><div style="position:absolute;left:667.33px;top:297.00px;width:7.74px;height:5.06px;background:rgb(240,240,241)"></div><div style="position:absolute;left:674.78px;top:297.00px;width:7.74px;height:5.06px;background:rgb(231,231,232)"></div><div style="position:absolute;left:682.22px;top:297.00px;width:7.74px;height:5.06px;background:rgb(235,235,236)"></div><div style="position:absolute;left:689.67px;top:297.00px;width:7.74px;height:5.06px;background:rgb(234,234,235)"></div><div style="position:absolute;left:697.11px;top:297.00px;width:7.74px;height:5.06px;background:rgb(238,238,239)"></div><div style="position:absolute;left:704.56px;top:297.00px;width:7.74px;height:5.06px;background:rgb(233,233,234)"></div><div style="position:absolute;left:645.00px;top:301.76px;width:7.74px;height:7.78px;background:rgb(194,194,195)"></div><div style="position:absolute;left:652.44px;top:301.76px;width:7.74px;height:7.78px;background:rgb(198,198,199)"></div><div style="position:absolute;left:659.89px;top:301.76px;width:7.74px;height:7.78px;background:rgb(203,203,204)"></div><div style="position:absolute;left:667.33px;top:301.76px;width:7.74px;height:7.78px;background:rgb(214,214,215)"></div><div style="position:absolute;left:674.78px;top:301.76px;width:7.74px;height:7.78px;background:rgb(186,186,187)"></div><div style="position:absolute;left:682.22px;top:301.76px;width:7.74px;height:7.78px;background:rgb(200,200,201)"></div><div style="position:absolute;left:689.67px;top:301.76px;width:7.74px;height:7.78px;background:rgb(215,215,216)"></div><div style="position:absolute;left:697.11px;top:301.76px;width:7.74px;height:7.78px;background:rgb(187,187,188)"></div><div style="position:absolute;left:704.56px;top:301.76px;width:7.74px;height:7.78px;background:rgb(192,192,193)"></div><div style="position:absolute;left:645.00px;top:309.24px;width:7.74px;height:5.06px;background:rgb(216,216,217)"></div><div style="position:absolute;left:652.44px;top:309.24px;width:7.74px;height:5.06px;background:rgb(236,236,237)"></div><div style="position:absolute;left:659.89px;top:309.24px;width:7.74px;height:5.06px;background:rgb(229,229,230)"></div><div style="position:absolute;left:667.33px;top:309.24px;width:7.74px;height:5.06px;background:rgb(227,227,228)"></div><div style="position:absolute;left:674.78px;top:309.24px;width:7.74px;height:5.06px;background:rgb(214,214,215)"></div><div style="position:absolute;left:682.22px;top:309.24px;width:7.74px;height:5.06px;background:rgb(230,230,231)"></div><div style="position:absolute;left:689.67px;top:309.24px;width:7.74px;height:5.06px;background:rgb(234,234,235)"></div><div style="position:absolute;left:697.11px;top:309.24px;width:7.74px;height:5.06px;background:rgb(237,237,238)"></div><div style="position:absolute;left:704.56px;top:309.24px;width:7.74px;height:5.06px;background:rgb(227,227,228)"></div><div style="position:absolute;left:712px;top:293.34999999999997px;height:22px;line-height:22px;font-size:15.4px;color:#606266;white-space:nowrap">察院...</div><div style="position:absolute;left:790.8px;width:141.20000000000005px;text-align:left;top:293.34999999999997px;height:22px;line-height:22px;font-size:15.4px;color:#606266;white-space:nowrap;">青海省-海东市-...</div><div style="position:absolute;left:932px;width:155.5999999999999px;text-align:center;top:293.34999999999997px;height:22px;line-height:22px;font-size:15.4px;color:#606266;white-space:nowrap;">线上代发</div><div style="position:absolute;left:1099.6px;top:293.34999999999997px;height:22px;line-height:22px;font-size:15.4px;color:#606266;white-space:nowrap">中国邮政储蓄银...</div><div style="position:absolute;left:1242px;width:155.70000000000005px;text-align:center;top:293.34999999999997px;height:22px;line-height:22px;font-size:16px;color:#606266;white-space:nowrap;">44</div><div style="position:absolute;left:1397.7px;width:153.29999999999995px;text-align:center;top:293.34999999999997px;height:22px;line-height:22px;font-size:16px;color:#606266;white-space:nowrap;">0</div><div style="position:absolute;left:1551px;width:155px;text-align:center;top:293.34999999999997px;height:22px;line-height:22px;font-size:15.4px;color:#3d95f0;white-space:nowrap;">设置</div><div style="position:absolute;left:1767.9px;top:299.74999999999994px;width:7px;height:9px;border:2px solid #8c8c8c;background:#e9edf2"><div style="position:absolute;left:3px;top:1px;width:1px;height:7px;background:#c5cad0"></div></div><div style="position:absolute;left:254px;width:60px;text-align:center;top:356.65px;height:22px;line-height:22px;font-size:16px;color:#606266;white-space:nowrap;">64</div><div style="position:absolute;left:326px;top:356.65px;height:22px;line-height:22px;font-size:15.4px;color:#606266;white-space:nowrap">年</div><div style="position:absolute;left:336.00px;top:360.00px;width:7.92px;height:4.78px;background:rgb(222,222,223)"></div><div style="position:absolute;left:343.62px;top:360.00px;width:7.92px;height:4.78px;background:rgb(237,237,238)"></div><div style="position:absolute;left:351.23px;top:360.00px;width:7.92px;height:4.78px;background:rgb(225,225,226)"></div><div style="position:absolute;left:358.85px;top:360.00px;width:7.92px;height:4.78px;background:rgb(234,234,235)"></div><div style="position:absolute;left:366.46px;top:360.00px;width:7.92px;height:4.78px;background:rgb(226,226,227)"></div><div style="position:absolute;left:374.08px;top:360.00px;width:7.92px;height:4.78px;background:rgb(243,243,244)"></div><div style="position:absolute;left:381.69px;top:360.00px;width:7.92px;height:4.78px;background:rgb(223,223,224)"></div><div style="position:absolute;left:389.31px;top:360.00px;width:7.92px;height:4.78px;background:rgb(226,226,227)"></div><div style="position:absolute;left:396.92px;top:360.00px;width:7.92px;height:4.78px;background:rgb(225,225,226)"></div><div style="position:absolute;left:404.54px;top:360.00px;width:7.92px;height:4.78px;background:rgb(239,239,240)"></div><div style="position:absolute;left:412.15px;top:360.00px;width:7.92px;height:4.78px;background:rgb(229,229,230)"></div><div style="position:absolute;left:419.77px;top:360.00px;width:7.92px;height:4.78px;background:rgb(244,244,245)"></div><div style="position:absolute;left:427.38px;top:360.00px;width:7.92px;height:4.78px;background:rgb(226,226,227)"></div><div style="position:absolute;left:336.00px;top:364.48px;width:7.92px;height:7.34px;background:rgb(195,195,196)"></div><div style="position:absolute;left:343.62px;top:364.48px;width:7.92px;height:7.34px;background:rgb(188,188,189)"></div><div style="position:absolute;left:351.23px;top:364.48px;width:7.92px;height:7.34px;background:rgb(189,189,190)"></div><div style="position:absolute;left:358.85px;top:364.48px;width:7.92px;height:7.34px;background:rgb(194,194,195)"></div><div style="position:absolute;left:366.46px;top:364.48px;width:7.92px;height:7.34px;background:rgb(200,200,201)"></div><div style="position:absolute;left:374.08px;top:364.48px;width:7.92px;height:7.34px;background:rgb(220,220,221)"></div><div style="position:absolute;left:381.69px;top:364.48px;width:7.92px;height:7.34px;background:rgb(214,214,215)"></div><div style="position:absolute;left:389.31px;top:364.48px;width:7.92px;height:7.34px;background:rgb(219,219,220)"></div><div style="position:absolute;left:396.92px;top:364.48px;width:7.92px;height:7.34px;background:rgb(212,212,213)"></div><div style="position:absolute;left:404.54px;top:364.48px;width:7.92px;height:7.34px;background:rgb(199,199,200)"></div><div style="position:absolute;left:412.15px;top:364.48px;width:7.92px;height:7.34px;background:rgb(191,191,192)"></div><div style="position:absolute;left:419.77px;top:364.48px;width:7.92px;height:7.34px;background:rgb(193,193,194)"></div><div style="position:absolute;left:427.38px;top:364.48px;width:7.92px;height:7.34px;background:rgb(187,187,188)"></div><div style="position:absolute;left:336.00px;top:371.52px;width:7.92px;height:4.78px;background:rgb(238,238,239)"></div><div style="position:absolute;left:343.62px;top:371.52px;width:7.92px;height:4.78px;background:rgb(226,226,227)"></div><div style="position:absolute;left:351.23px;top:371.52px;width:7.92px;height:4.78px;background:rgb(224,224,225)"></div><div style="position:absolute;left:358.85px;top:371.52px;width:7.92px;height:4.78px;background:rgb(220,220,221)"></div><div style="position:absolute;left:366.46px;top:371.52px;width:7.92px;height:4.78px;background:rgb(220,220,221)"></div><div style="position:absolute;left:374.08px;top:371.52px;width:7.92px;height:4.78px;background:rgb(224,224,225)"></div><div style="position:absolute;left:381.69px;top:371.52px;width:7.92px;height:4.78px;background:rgb(226,226,227)"></div><div style="position:absolute;left:389.31px;top:371.52px;width:7.92px;height:4.78px;background:rgb(225,225,226)"></div><div style="position:absolute;left:396.92px;top:371.52px;width:7.92px;height:4.78px;background:rgb(233,233,234)"></div><div style="position:absolute;left:404.54px;top:371.52px;width:7.92px;height:4.78px;background:rgb(221,221,222)"></div><div style="position:absolute;left:412.15px;top:371.52px;width:7.92px;height:4.78px;background:rgb(220,220,221)"></div><div style="position:absolute;left:419.77px;top:371.52px;width:7.92px;height:4.78px;background:rgb(237,237,238)"></div><div style="position:absolute;left:427.38px;top:371.52px;width:7.92px;height:4.78px;background:rgb(220,220,221)"></div><div style="position:absolute;left:435px;top:356.65px;height:22px;line-height:22px;font-size:15.4px;color:#606266;white-space:nowrap">...</div><div style="position:absolute;left:636px;top:356.65px;height:22px;line-height:22px;font-size:15.4px;color:#606266;white-space:nowrap">河北</div><div style="position:absolute;left:658.00px;top:360.00px;width:7.97px;height:4.78px;background:rgb(240,240,241)"></div><div style="position:absolute;left:665.67px;top:360.00px;width:7.97px;height:4.78px;background:rgb(227,227,228)"></div><div style="position:absolute;left:673.33px;top:360.00px;width:7.97px;height:4.78px;background:rgb(242,242,243)"></div><div style="position:absolute;left:681.00px;top:360.00px;width:7.97px;height:4.78px;background:rgb(229,229,230)"></div><div style="position:absolute;left:688.67px;top:360.00px;width:7.97px;height:4.78px;background:rgb(230,230,231)"></div><div style="position:absolute;left:696.33px;top:360.00px;width:7.97px;height:4.78px;background:rgb(237,237,238)"></div><div style="position:absolute;left:704.00px;top:360.00px;width:7.97px;height:4.78px;background:rgb(242,242,243)"></div><div style="position:absolute;left:711.67px;top:360.00px;width:7.97px;height:4.78px;background:rgb(239,239,240)"></div><div style="position:absolute;left:719.33px;top:360.00px;width:7.97px;height:4.78px;background:rgb(238,238,239)"></div><div style="position:absolute;left:658.00px;top:364.48px;width:7.97px;height:7.34px;background:rgb(197,197,198)"></div><div style="position:absolute;left:665.67px;top:364.48px;width:7.97px;height:7.34px;background:rgb(218,218,219)"></div><div style="position:absolute;left:673.33px;top:364.48px;width:7.97px;height:7.34px;background:rgb(206,206,207)"></div><div style="position:absolute;left:681.00px;top:364.48px;width:7.97px;height:7.34px;background:rgb(219,219,220)"></div><div style="position:absolute;left:688.67px;top:364.48px;width:7.97px;height:7.34px;background:rgb(216,216,217)"></div><div style="position:absolute;left:696.33px;top:364.48px;width:7.97px;height:7.34px;background:rgb(214,214,215)"></div><div style="position:absolute;left:704.00px;top:364.48px;width:7.97px;height:7.34px;background:rgb(204,204,205)"></div><div style="position:absolute;left:711.67px;top:364.48px;width:7.97px;height:7.34px;background:rgb(190,190,191)"></div><div style="position:absolute;left:719.33px;top:364.48px;width:7.97px;height:7.34px;background:rgb(205,205,206)"></div><div style="position:absolute;left:658.00px;top:371.52px;width:7.97px;height:4.78px;background:rgb(227,227,228)"></div><div style="position:absolute;left:665.67px;top:371.52px;width:7.97px;height:4.78px;background:rgb(223,223,224)"></div><div style="position:absolute;left:673.33px;top:371.52px;width:7.97px;height:4.78px;background:rgb(230,230,231)"></div><div style="position:absolute;left:681.00px;top:371.52px;width:7.97px;height:4.78px;background:rgb(229,229,230)"></div><div style="position:absolute;left:688.67px;top:371.52px;width:7.97px;height:4.78px;background:rgb(215,215,216)"></div><div style="position:absolute;left:696.33px;top:371.52px;width:7.97px;height:4.78px;background:rgb(237,237,238)"></div><div style="position:absolute;left:704.00px;top:371.52px;width:7.97px;height:4.78px;background:rgb(233,233,234)"></div><div style="position:absolute;left:711.67px;top:371.52px;width:7.97px;height:4.78px;background:rgb(237,237,238)"></div><div style="position:absolute;left:719.33px;top:371.52px;width:7.97px;height:4.78px;background:rgb(235,235,236)"></div><div style="position:absolute;left:727px;top:356.65px;height:22px;line-height:22px;font-size:15.4px;color:#606266;white-space:nowrap">工...</div><div style="position:absolute;left:790.8px;width:141.20000000000005px;text-align:left;top:356.65px;height:22px;line-height:22px;font-size:15.4px;color:#606266;white-space:nowrap;">青海省-海东市-...</div><div style="position:absolute;left:932px;width:155.5999999999999px;text-align:center;top:356.65px;height:22px;line-height:22px;font-size:15.4px;color:#f0202a;white-space:nowrap;">暂未配置</div><div style="position:absolute;left:1087.6px;width:154.4000000000001px;text-align:center;top:356.65px;height:22px;line-height:22px;font-size:15.4px;color:#606266;white-space:nowrap;"></div><div style="position:absolute;left:1242px;width:155.70000000000005px;text-align:center;top:356.65px;height:22px;line-height:22px;font-size:16px;color:#606266;white-space:nowrap;"></div><div style="position:absolute;left:1397.7px;width:153.29999999999995px;text-align:center;top:356.65px;height:22px;line-height:22px;font-size:16px;color:#606266;white-space:nowrap;">0</div><div style="position:absolute;left:1551px;width:155px;text-align:center;top:356.65px;height:22px;line-height:22px;font-size:15.4px;color:#3d95f0;white-space:nowrap;">设置</div><div style="position:absolute;left:1767.9px;top:363.04999999999995px;width:7px;height:9px;border:2px solid #8c8c8c;background:#e9edf2"><div style="position:absolute;left:3px;top:1px;width:1px;height:7px;background:#c5cad0"></div></div><div style="position:absolute;left:254px;width:60px;text-align:center;top:419.94999999999993px;height:22px;line-height:22px;font-size:16px;color:#606266;white-space:nowrap;">65</div><div style="position:absolute;left:326px;top:419.94999999999993px;height:22px;line-height:22px;font-size:15.4px;color:#606266;white-space:nowrap">青</div><div style="position:absolute;left:337.50px;top:421.50px;width:7.80px;height:5.34px;background:rgb(234,234,235)"></div><div style="position:absolute;left:345.00px;top:421.50px;width:7.80px;height:5.34px;background:rgb(232,232,233)"></div><div style="position:absolute;left:352.50px;top:421.50px;width:7.80px;height:5.34px;background:rgb(229,229,230)"></div><div style="position:absolute;left:360.00px;top:421.50px;width:7.80px;height:5.34px;background:rgb(227,227,228)"></div><div style="position:absolute;left:367.50px;top:421.50px;width:7.80px;height:5.34px;background:rgb(234,234,235)"></div><div style="position:absolute;left:375.00px;top:421.50px;width:7.80px;height:5.34px;background:rgb(240,240,241)"></div><div style="position:absolute;left:382.50px;top:421.50px;width:7.80px;height:5.34px;background:rgb(244,244,245)"></div><div style="position:absolute;left:390.00px;top:421.50px;width:7.80px;height:5.34px;background:rgb(231,231,232)"></div><div style="position:absolute;left:397.50px;top:421.50px;width:7.80px;height:5.34px;background:rgb(239,239,240)"></div><div style="position:absolute;left:405.00px;top:421.50px;width:7.80px;height:5.34px;background:rgb(230,230,231)"></div><div style="position:absolute;left:412.50px;top:421.50px;width:7.80px;height:5.34px;background:rgb(234,234,235)"></div><div style="position:absolute;left:420.00px;top:421.50px;width:7.80px;height:5.34px;background:rgb(240,240,241)"></div><div style="position:absolute;left:427.50px;top:421.50px;width:7.80px;height:5.34px;background:rgb(222,222,223)"></div><div style="position:absolute;left:337.50px;top:426.54px;width:7.80px;height:8.22px;background:rgb(201,201,202)"></div><div style="position:absolute;left:345.00px;top:426.54px;width:7.80px;height:8.22px;background:rgb(187,187,188)"></div><div style="position:absolute;left:352.50px;top:426.54px;width:7.80px;height:8.22px;background:rgb(214,214,215)"></div><div style="position:absolute;left:360.00px;top:426.54px;width:7.80px;height:8.22px;background:rgb(195,195,196)"></div><div style="position:absolute;left:367.50px;top:426.54px;width:7.80px;height:8.22px;background:rgb(195,195,196)"></div><div style="position:absolute;left:375.00px;top:426.54px;width:7.80px;height:8.22px;background:rgb(206,206,207)"></div><div style="position:absolute;left:382.50px;top:426.54px;width:7.80px;height:8.22px;background:rgb(196,196,197)"></div><div style="position:absolute;left:390.00px;top:426.54px;width:7.80px;height:8.22px;background:rgb(202,202,203)"></div><div style="position:absolute;left:397.50px;top:426.54px;width:7.80px;height:8.22px;background:rgb(189,189,190)"></div><div style="position:absolute;left:405.00px;top:426.54px;width:7.80px;height:8.22px;background:rgb(193,193,194)"></div><div style="position:absolute;left:412.50px;top:426.54px;width:7.80px;height:8.22px;background:rgb(188,188,189)"></div><div style="position:absolute;left:420.00px;top:426.54px;width:7.80px;height:8.22px;background:rgb(213,213,214)"></div><div style="position:absolute;left:427.50px;top:426.54px;width:7.80px;height:8.22px;background:rgb(204,204,205)"></div><div style="position:absolute;left:337.50px;top:434.46px;width:7.80px;height:5.34px;background:rgb(237,237,238)"></div><div style="position:absolute;left:345.00px;top:434.46px;width:7.80px;height:5.34px;background:rgb(220,220,221)"></div><div style="position:absolute;left:352.50px;top:434.46px;width:7.80px;height:5.34px;background:rgb(216,216,217)"></div><div style="position:absolute;left:360.00px;top:434.46px;width:7.80px;height:5.34px;background:rgb(237,237,238)"></div><div style="position:absolute;left:367.50px;top:434.46px;width:7.80px;height:5.34px;background:rgb(225,225,226)"></div><div style="position:absolute;left:375.00px;top:434.46px;width:7.80px;height:5.34px;background:rgb(237,237,238)"></div><div style="position:absolute;left:382.50px;top:434.46px;width:7.80px;height:5.34px;background:rgb(229,229,230)"></div><div style="position:absolute;left:390.00px;top:434.46px;width:7.80px;height:5.34px;background:rgb(218,218,219)"></div><div style="position:absolute;left:397.50px;top:434.46px;width:7.80px;height:5.34px;background:rgb(231,231,232)"></div><div style="position:absolute;left:405.00px;top:434.46px;width:7.80px;height:5.34px;background:rgb(235,235,236)"></div><div style="position:absolute;left:412.50px;top:434.46px;width:7.80px;height:5.34px;background:rgb(214,214,215)"></div><div style="position:absolute;left:420.00px;top:434.46px;width:7.80px;height:5.34px;background:rgb(217,217,218)"></div><div style="position:absolute;left:427.50px;top:434.46px;width:7.80px;height:5.34px;background:rgb(217,217,218)"></div><div style="position:absolute;left:435px;top:419.94999999999993px;height:22px;line-height:22px;font-size:15.4px;color:#606266;white-space:nowrap">...</div><div style="position:absolute;left:637.00px;top:422.50px;width:7.97px;height:6.04px;background:rgb(223,223,224)"></div><div style="position:absolute;left:644.67px;top:422.50px;width:7.97px;height:6.04px;background:rgb(231,231,232)"></div><div style="position:absolute;left:652.33px;top:422.50px;width:7.97px;height:6.04px;background:rgb(244,244,245)"></div><div style="position:absolute;left:660.00px;top:422.50px;width:7.97px;height:6.04px;background:rgb(226,226,227)"></div><div style="position:absolute;left:667.67px;top:422.50px;width:7.97px;height:6.04px;background:rgb(236,236,237)"></div><div style="position:absolute;left:675.33px;top:422.50px;width:7.97px;height:6.04px;background:rgb(233,233,234)"></div><div style="position:absolute;left:683.00px;top:422.50px;width:7.97px;height:6.04px;background:rgb(243,243,244)"></div><div style="position:absolute;left:690.67px;top:422.50px;width:7.97px;height:6.04px;background:rgb(244,244,245)"></div><div style="position:absolute;left:698.33px;top:422.50px;width:7.97px;height:6.04px;background:rgb(225,225,226)"></div><div style="position:absolute;left:706.00px;top:422.50px;width:7.97px;height:6.04px;background:rgb(236,236,237)"></div><div style="position:absolute;left:713.67px;top:422.50px;width:7.97px;height:6.04px;background:rgb(241,241,242)"></div><div style="position:absolute;left:721.33px;top:422.50px;width:7.97px;height:6.04px;background:rgb(237,237,238)"></div><div style="position:absolute;left:637.00px;top:428.24px;width:7.97px;height:9.32px;background:rgb(187,187,188)"></div><div style="position:absolute;left:644.67px;top:428.24px;width:7.97px;height:9.32px;background:rgb(218,218,219)"></div><div style="position:absolute;left:652.33px;top:428.24px;width:7.97px;height:9.32px;background:rgb(213,213,214)"></div><div style="position:absolute;left:660.00px;top:428.24px;width:7.97px;height:9.32px;background:rgb(222,222,223)"></div><div style="position:absolute;left:667.67px;top:428.24px;width:7.97px;height:9.32px;background:rgb(209,209,210)"></div><div style="position:absolute;left:675.33px;top:428.24px;width:7.97px;height:9.32px;background:rgb(221,221,222)"></div><div style="position:absolute;left:683.00px;top:428.24px;width:7.97px;height:9.32px;background:rgb(213,213,214)"></div><div style="position:absolute;left:690.67px;top:428.24px;width:7.97px;height:9.32px;background:rgb(211,211,212)"></div><div style="position:absolute;left:698.33px;top:428.24px;width:7.97px;height:9.32px;background:rgb(197,197,198)"></div><div style="position:absolute;left:706.00px;top:428.24px;width:7.97px;height:9.32px;background:rgb(189,189,190)"></div><div style="position:absolute;left:713.67px;top:428.24px;width:7.97px;height:9.32px;background:rgb(192,192,193)"></div><div style="position:absolute;left:721.33px;top:428.24px;width:7.97px;height:9.32px;background:rgb(193,193,194)"></div><div style="position:absolute;left:637.00px;top:437.26px;width:7.97px;height:6.04px;background:rgb(226,226,227)"></div><div style="position:absolute;left:644.67px;top:437.26px;width:7.97px;height:6.04px;background:rgb(218,218,219)"></div><div style="position:absolute;left:652.33px;top:437.26px;width:7.97px;height:6.04px;background:rgb(217,217,218)"></div><div style="position:absolute;left:660.00px;top:437.26px;width:7.97px;height:6.04px;background:rgb(219,219,220)"></div><div style="position:absolute;left:667.67px;top:437.26px;width:7.97px;height:6.04px;background:rgb(230,230,231)"></div><div style="position:absolute;left:675.33px;top:437.26px;width:7.97px;height:6.04px;background:rgb(229,229,230)"></div><div style="position:absolute;left:683.00px;top:437.26px;width:7.97px;height:6.04px;background:rgb(218,218,219)"></div><div style="position:absolute;left:690.67px;top:437.26px;width:7.97px;height:6.04px;background:rgb(238,238,239)"></div><div style="position:absolute;left:698.33px;top:437.26px;width:7.97px;height:6.04px;background:rgb(226,226,227)"></div><div style="position:absolute;left:706.00px;top:437.26px;width:7.97px;height:6.04px;background:rgb(233,233,234)"></div><div style="position:absolute;left:713.67px;top:437.26px;width:7.97px;height:6.04px;background:rgb(230,230,231)"></div><div style="position:absolute;left:721.33px;top:437.26px;width:7.97px;height:6.04px;background:rgb(222,222,223)"></div><div style="position:absolute;left:729px;top:419.94999999999993px;height:22px;line-height:22px;font-size:15.4px;color:#606266;white-space:nowrap">集...</div><div style="position:absolute;left:790.8px;width:141.20000000000005px;text-align:left;top:419.94999999999993px;height:22px;line-height:22px;font-size:15.4px;color:#606266;white-space:nowrap;">青海省-海东市-...</div><div style="position:absolute;left:932px;width:155.5999999999999px;text-align:center;top:419.94999999999993px;height:22px;line-height:22px;font-size:15.4px;color:#606266;white-space:nowrap;">线上代发</div><div style="position:absolute;left:1087.6px;width:154.4000000000001px;text-align:center;top:419.94999999999993px;height:22px;line-height:22px;font-size:15.4px;color:#606266;white-space:nowrap;">中国农业银行</div><div style="position:absolute;left:1242px;width:155.70000000000005px;text-align:center;top:419.94999999999993px;height:22px;line-height:22px;font-size:16px;color:#606266;white-space:nowrap;">150</div><div style="position:absolute;left:1397.7px;width:153.29999999999995px;text-align:center;top:419.94999999999993px;height:22px;line-height:22px;font-size:16px;color:#606266;white-space:nowrap;">78</div><div style="position:absolute;left:1551px;width:155px;text-align:center;top:419.94999999999993px;height:22px;line-height:22px;font-size:15.4px;color:#3d95f0;white-space:nowrap;">设置</div><div style="position:absolute;left:1767.9px;top:426.3499999999999px;width:7px;height:9px;border:2px solid #8c8c8c;background:#e9edf2"><div style="position:absolute;left:3px;top:1px;width:1px;height:7px;background:#c5cad0"></div></div><div style="position:absolute;left:254px;width:60px;text-align:center;top:483.25px;height:22px;line-height:22px;font-size:16px;color:#606266;white-space:nowrap;">66</div><div style="position:absolute;left:326px;top:483.25px;height:22px;line-height:22px;font-size:15.4px;color:#606266;white-space:nowrap">循</div><div style="position:absolute;left:336.00px;top:486.00px;width:7.88px;height:5.34px;background:rgb(229,229,230)"></div><div style="position:absolute;left:343.58px;top:486.00px;width:7.88px;height:5.34px;background:rgb(238,238,239)"></div><div style="position:absolute;left:351.15px;top:486.00px;width:7.88px;height:5.34px;background:rgb(239,239,240)"></div><div style="position:absolute;left:358.73px;top:486.00px;width:7.88px;height:5.34px;background:rgb(227,227,228)"></div><div style="position:absolute;left:366.31px;top:486.00px;width:7.88px;height:5.34px;background:rgb(229,229,230)"></div><div style="position:absolute;left:373.88px;top:486.00px;width:7.88px;height:5.34px;background:rgb(229,229,230)"></div><div style="position:absolute;left:381.46px;top:486.00px;width:7.88px;height:5.34px;background:rgb(239,239,240)"></div><div style="position:absolute;left:389.04px;top:486.00px;width:7.88px;height:5.34px;background:rgb(230,230,231)"></div><div style="position:absolute;left:396.62px;top:486.00px;width:7.88px;height:5.34px;background:rgb(234,234,235)"></div><div style="position:absolute;left:404.19px;top:486.00px;width:7.88px;height:5.34px;background:rgb(239,239,240)"></div><div style="position:absolute;left:411.77px;top:486.00px;width:7.88px;height:5.34px;background:rgb(236,236,237)"></div><div style="position:absolute;left:419.35px;top:486.00px;width:7.88px;height:5.34px;background:rgb(244,244,245)"></div><div style="position:absolute;left:426.92px;top:486.00px;width:7.88px;height:5.34px;background:rgb(239,239,240)"></div><div style="position:absolute;left:336.00px;top:491.04px;width:7.88px;height:8.22px;background:rgb(219,219,220)"></div><div style="position:absolute;left:343.58px;top:491.04px;width:7.88px;height:8.22px;background:rgb(207,207,208)"></div><div style="position:absolute;left:351.15px;top:491.04px;width:7.88px;height:8.22px;background:rgb(209,209,210)"></div><div style="position:absolute;left:358.73px;top:491.04px;width:7.88px;height:8.22px;background:rgb(210,210,211)"></div><div style="position:absolute;left:366.31px;top:491.04px;width:7.88px;height:8.22px;background:rgb(203,203,204)"></div><div style="position:absolute;left:373.88px;top:491.04px;width:7.88px;height:8.22px;background:rgb(211,211,212)"></div><div style="position:absolute;left:381.46px;top:491.04px;width:7.88px;height:8.22px;background:rgb(186,186,187)"></div><div style="position:absolute;left:389.04px;top:491.04px;width:7.88px;height:8.22px;background:rgb(193,193,194)"></div><div style="position:absolute;left:396.62px;top:491.04px;width:7.88px;height:8.22px;background:rgb(187,187,188)"></div><div style="position:absolute;left:404.19px;top:491.04px;width:7.88px;height:8.22px;background:rgb(220,220,221)"></div><div style="position:absolute;left:411.77px;top:491.04px;width:7.88px;height:8.22px;background:rgb(202,202,203)"></div><div style="position:absolute;left:419.35px;top:491.04px;width:7.88px;height:8.22px;background:rgb(188,188,189)"></div><div style="position:absolute;left:426.92px;top:491.04px;width:7.88px;height:8.22px;background:rgb(216,216,217)"></div><div style="position:absolute;left:336.00px;top:498.96px;width:7.88px;height:5.34px;background:rgb(235,235,236)"></div><div style="position:absolute;left:343.58px;top:498.96px;width:7.88px;height:5.34px;background:rgb(219,219,220)"></div><div style="position:absolute;left:351.15px;top:498.96px;width:7.88px;height:5.34px;background:rgb(225,225,226)"></div><div style="position:absolute;left:358.73px;top:498.96px;width:7.88px;height:5.34px;background:rgb(233,233,234)"></div><div style="position:absolute;left:366.31px;top:498.96px;width:7.88px;height:5.34px;background:rgb(223,223,224)"></div><div style="position:absolute;left:373.88px;top:498.96px;width:7.88px;height:5.34px;background:rgb(225,225,226)"></div><div style="position:absolute;left:381.46px;top:498.96px;width:7.88px;height:5.34px;background:rgb(228,228,229)"></div><div style="position:absolute;left:389.04px;top:498.96px;width:7.88px;height:5.34px;background:rgb(238,238,239)"></div><div style="position:absolute;left:396.62px;top:498.96px;width:7.88px;height:5.34px;background:rgb(234,234,235)"></div><div style="position:absolute;left:404.19px;top:498.96px;width:7.88px;height:5.34px;background:rgb(220,220,221)"></div><div style="position:absolute;left:411.77px;top:498.96px;width:7.88px;height:5.34px;background:rgb(238,238,239)"></div><div style="position:absolute;left:419.35px;top:498.96px;width:7.88px;height:5.34px;background:rgb(238,238,239)"></div><div style="position:absolute;left:426.92px;top:498.96px;width:7.88px;height:5.34px;background:rgb(214,214,215)"></div><div style="position:absolute;left:435px;top:483.25px;height:22px;line-height:22px;font-size:15.4px;color:#606266;white-space:nowrap">...</div><div style="position:absolute;left:636px;top:483.25px;height:22px;line-height:22px;font-size:15.4px;color:#606266;white-space:nowrap">中</div><div style="position:absolute;left:651.50px;top:486.00px;width:7.90px;height:6.18px;background:rgb(241,241,242)"></div><div style="position:absolute;left:659.10px;top:486.00px;width:7.90px;height:6.18px;background:rgb(228,228,229)"></div><div style="position:absolute;left:666.70px;top:486.00px;width:7.90px;height:6.18px;background:rgb(236,236,237)"></div><div style="position:absolute;left:674.30px;top:486.00px;width:7.90px;height:6.18px;background:rgb(238,238,239)"></div><div style="position:absolute;left:681.90px;top:486.00px;width:7.90px;height:6.18px;background:rgb(244,244,245)"></div><div style="position:absolute;left:689.50px;top:486.00px;width:7.90px;height:6.18px;background:rgb(237,237,238)"></div><div style="position:absolute;left:697.10px;top:486.00px;width:7.90px;height:6.18px;background:rgb(244,244,245)"></div><div style="position:absolute;left:704.70px;top:486.00px;width:7.90px;height:6.18px;background:rgb(238,238,239)"></div><div style="position:absolute;left:712.30px;top:486.00px;width:7.90px;height:6.18px;background:rgb(233,233,234)"></div><div style="position:absolute;left:719.90px;top:486.00px;width:7.90px;height:6.18px;background:rgb(236,236,237)"></div><div style="position:absolute;left:651.50px;top:491.88px;width:7.90px;height:9.54px;background:rgb(187,187,188)"></div><div style="position:absolute;left:659.10px;top:491.88px;width:7.90px;height:9.54px;background:rgb(188,188,189)"></div><div style="position:absolute;left:666.70px;top:491.88px;width:7.90px;height:9.54px;background:rgb(196,196,197)"></div><div style="position:absolute;left:674.30px;top:491.88px;width:7.90px;height:9.54px;background:rgb(208,208,209)"></div><div style="position:absolute;left:681.90px;top:491.88px;width:7.90px;height:9.54px;background:rgb(194,194,195)"></div><div style="position:absolute;left:689.50px;top:491.88px;width:7.90px;height:9.54px;background:rgb(202,202,203)"></div><div style="position:absolute;left:697.10px;top:491.88px;width:7.90px;height:9.54px;background:rgb(189,189,190)"></div><div style="position:absolute;left:704.70px;top:491.88px;width:7.90px;height:9.54px;background:rgb(196,196,197)"></div><div style="position:absolute;left:712.30px;top:491.88px;width:7.90px;height:9.54px;background:rgb(189,189,190)"></div><div style="position:absolute;left:719.90px;top:491.88px;width:7.90px;height:9.54px;background:rgb(209,209,210)"></div><div style="position:absolute;left:651.50px;top:501.12px;width:7.90px;height:6.18px;background:rgb(221,221,222)"></div><div style="position:absolute;left:659.10px;top:501.12px;width:7.90px;height:6.18px;background:rgb(228,228,229)"></div><div style="position:absolute;left:666.70px;top:501.12px;width:7.90px;height:6.18px;background:rgb(220,220,221)"></div><div style="position:absolute;left:674.30px;top:501.12px;width:7.90px;height:6.18px;background:rgb(221,221,222)"></div><div style="position:absolute;left:681.90px;top:501.12px;width:7.90px;height:6.18px;background:rgb(218,218,219)"></div><div style="position:absolute;left:689.50px;top:501.12px;width:7.90px;height:6.18px;background:rgb(218,218,219)"></div><div style="position:absolute;left:697.10px;top:501.12px;width:7.90px;height:6.18px;background:rgb(225,225,226)"></div><div style="position:absolute;left:704.70px;top:501.12px;width:7.90px;height:6.18px;background:rgb(230,230,231)"></div><div style="position:absolute;left:712.30px;top:501.12px;width:7.90px;height:6.18px;background:rgb(238,238,239)"></div><div style="position:absolute;left:719.90px;top:501.12px;width:7.90px;height:6.18px;background:rgb(234,234,235)"></div><div style="position:absolute;left:728px;top:483.25px;height:22px;line-height:22px;font-size:15.4px;color:#606266;white-space:nowrap">有...</div><div style="position:absolute;left:790.8px;width:141.20000000000005px;text-align:left;top:483.25px;height:22px;line-height:22px;font-size:15.4px;color:#606266;white-space:nowrap;">青海省-海东市-...</div><div style="position:absolute;left:932px;width:155.5999999999999px;text-align:center;top:483.25px;height:22px;line-height:22px;font-size:15.4px;color:#606266;white-space:nowrap;">线上代发</div><div style="position:absolute;left:1099.6px;top:483.25px;height:22px;line-height:22px;font-size:15.4px;color:#606266;white-space:nowrap">中国邮政储蓄银...</div><div style="position:absolute;left:1242px;width:155.70000000000005px;text-align:center;top:483.25px;height:22px;line-height:22px;font-size:16px;color:#606266;white-space:nowrap;">64</div><div style="position:absolute;left:1397.7px;width:153.29999999999995px;text-align:center;top:483.25px;height:22px;line-height:22px;font-size:16px;color:#606266;white-space:nowrap;">17</div><div style="position:absolute;left:1551px;width:155px;text-align:center;top:483.25px;height:22px;line-height:22px;font-size:15.4px;color:#3d95f0;white-space:nowrap;">设置</div><div style="position:absolute;left:1767.9px;top:489.65px;width:7px;height:9px;border:2px solid #8c8c8c;background:#e9edf2"><div style="position:absolute;left:3px;top:1px;width:1px;height:7px;background:#c5cad0"></div></div><div style="position:absolute;left:254px;width:60px;text-align:center;top:546.55px;height:22px;line-height:22px;font-size:16px;color:#606266;white-space:nowrap;">67</div><div style="position:absolute;left:326px;top:546.55px;height:22px;line-height:22px;font-size:15.4px;color:#606266;white-space:nowrap">化</div><div style="position:absolute;left:344.00px;top:549.00px;width:7.88px;height:5.62px;background:rgb(237,237,238)"></div><div style="position:absolute;left:351.58px;top:549.00px;width:7.88px;height:5.62px;background:rgb(227,227,228)"></div><div style="position:absolute;left:359.17px;top:549.00px;width:7.88px;height:5.62px;background:rgb(239,239,240)"></div><div style="position:absolute;left:366.75px;top:549.00px;width:7.88px;height:5.62px;background:rgb(228,228,229)"></div><div style="position:absolute;left:374.33px;top:549.00px;width:7.88px;height:5.62px;background:rgb(232,232,233)"></div><div style="position:absolute;left:381.92px;top:549.00px;width:7.88px;height:5.62px;background:rgb(231,231,232)"></div><div style="position:absolute;left:389.50px;top:549.00px;width:7.88px;height:5.62px;background:rgb(232,232,233)"></div><div style="position:absolute;left:397.08px;top:549.00px;width:7.88px;height:5.62px;background:rgb(244,244,245)"></div><div style="position:absolute;left:404.67px;top:549.00px;width:7.88px;height:5.62px;background:rgb(222,222,223)"></div><div style="position:absolute;left:412.25px;top:549.00px;width:7.88px;height:5.62px;background:rgb(237,237,238)"></div><div style="position:absolute;left:419.83px;top:549.00px;width:7.88px;height:5.62px;background:rgb(233,233,234)"></div><div style="position:absolute;left:427.42px;top:549.00px;width:7.88px;height:5.62px;background:rgb(233,233,234)"></div><div style="position:absolute;left:344.00px;top:554.32px;width:7.88px;height:8.66px;background:rgb(190,190,191)"></div><div style="position:absolute;left:351.58px;top:554.32px;width:7.88px;height:8.66px;background:rgb(211,211,212)"></div><div style="position:absolute;left:359.17px;top:554.32px;width:7.88px;height:8.66px;background:rgb(215,215,216)"></div><div style="position:absolute;left:366.75px;top:554.32px;width:7.88px;height:8.66px;background:rgb(207,207,208)"></div><div style="position:absolute;left:374.33px;top:554.32px;width:7.88px;height:8.66px;background:rgb(196,196,197)"></div><div style="position:absolute;left:381.92px;top:554.32px;width:7.88px;height:8.66px;background:rgb(207,207,208)"></div><div style="position:absolute;left:389.50px;top:554.32px;width:7.88px;height:8.66px;background:rgb(186,186,187)"></div><div style="position:absolute;left:397.08px;top:554.32px;width:7.88px;height:8.66px;background:rgb(218,218,219)"></div><div style="position:absolute;left:404.67px;top:554.32px;width:7.88px;height:8.66px;background:rgb(191,191,192)"></div><div style="position:absolute;left:412.25px;top:554.32px;width:7.88px;height:8.66px;background:rgb(197,197,198)"></div><div style="position:absolute;left:419.83px;top:554.32px;width:7.88px;height:8.66px;background:rgb(207,207,208)"></div><div style="position:absolute;left:427.42px;top:554.32px;width:7.88px;height:8.66px;background:rgb(187,187,188)"></div><div style="position:absolute;left:344.00px;top:562.68px;width:7.88px;height:5.62px;background:rgb(227,227,228)"></div><div style="position:absolute;left:351.58px;top:562.68px;width:7.88px;height:5.62px;background:rgb(218,218,219)"></div><div style="position:absolute;left:359.17px;top:562.68px;width:7.88px;height:5.62px;background:rgb(218,218,219)"></div><div style="position:absolute;left:366.75px;top:562.68px;width:7.88px;height:5.62px;background:rgb(237,237,238)"></div><div style="position:absolute;left:374.33px;top:562.68px;width:7.88px;height:5.62px;background:rgb(226,226,227)"></div><div style="position:absolute;left:381.92px;top:562.68px;width:7.88px;height:5.62px;background:rgb(223,223,224)"></div><div style="position:absolute;left:389.50px;top:562.68px;width:7.88px;height:5.62px;background:rgb(223,223,224)"></div><div style="position:absolute;left:397.08px;top:562.68px;width:7.88px;height:5.62px;background:rgb(237,237,238)"></div><div style="position:absolute;left:404.67px;top:562.68px;width:7.88px;height:5.62px;background:rgb(224,224,225)"></div><div style="position:absolute;left:412.25px;top:562.68px;width:7.88px;height:5.62px;background:rgb(228,228,229)"></div><div style="position:absolute;left:419.83px;top:562.68px;width:7.88px;height:5.62px;background:rgb(224,224,225)"></div><div style="position:absolute;left:427.42px;top:562.68px;width:7.88px;height:5.62px;background:rgb(233,233,234)"></div><div style="position:absolute;left:435px;top:546.55px;height:22px;line-height:22px;font-size:15.4px;color:#606266;white-space:nowrap">...</div><div style="position:absolute;left:636px;top:546.55px;height:22px;line-height:22px;font-size:15.4px;color:#606266;white-space:nowrap">陕</div><div style="position:absolute;left:645.00px;top:549.00px;width:7.94px;height:5.90px;background:rgb(236,236,237)"></div><div style="position:absolute;left:652.64px;top:549.00px;width:7.94px;height:5.90px;background:rgb(236,236,237)"></div><div style="position:absolute;left:660.27px;top:549.00px;width:7.94px;height:5.90px;background:rgb(231,231,232)"></div><div style="position:absolute;left:667.91px;top:549.00px;width:7.94px;height:5.90px;background:rgb(230,230,231)"></div><div style="position:absolute;left:675.55px;top:549.00px;width:7.94px;height:5.90px;background:rgb(237,237,238)"></div><div style="position:absolute;left:683.18px;top:549.00px;width:7.94px;height:5.90px;background:rgb(243,243,244)"></div><div style="position:absolute;left:690.82px;top:549.00px;width:7.94px;height:5.90px;background:rgb(224,224,225)"></div><div style="position:absolute;left:698.45px;top:549.00px;width:7.94px;height:5.90px;background:rgb(234,234,235)"></div><div style="position:absolute;left:706.09px;top:549.00px;width:7.94px;height:5.90px;background:rgb(224,224,225)"></div><div style="position:absolute;left:713.73px;top:549.00px;width:7.94px;height:5.90px;background:rgb(224,224,225)"></div><div style="position:absolute;left:721.36px;top:549.00px;width:7.94px;height:5.90px;background:rgb(243,243,244)"></div><div style="position:absolute;left:645.00px;top:554.60px;width:7.94px;height:9.10px;background:rgb(198,198,199)"></div><div style="position:absolute;left:652.64px;top:554.60px;width:7.94px;height:9.10px;background:rgb(204,204,205)"></div><div style="position:absolute;left:660.27px;top:554.60px;width:7.94px;height:9.10px;background:rgb(190,190,191)"></div><div style="position:absolute;left:667.91px;top:554.60px;width:7.94px;height:9.10px;background:rgb(205,205,206)"></div><div style="position:absolute;left:675.55px;top:554.60px;width:7.94px;height:9.10px;background:rgb(189,189,190)"></div><div style="position:absolute;left:683.18px;top:554.60px;width:7.94px;height:9.10px;background:rgb(200,200,201)"></div><div style="position:absolute;left:690.82px;top:554.60px;width:7.94px;height:9.10px;background:rgb(194,194,195)"></div><div style="position:absolute;left:698.45px;top:554.60px;width:7.94px;height:9.10px;background:rgb(207,207,208)"></div><div style="position:absolute;left:706.09px;top:554.60px;width:7.94px;height:9.10px;background:rgb(201,201,202)"></div><div style="position:absolute;left:713.73px;top:554.60px;width:7.94px;height:9.10px;background:rgb(203,203,204)"></div><div style="position:absolute;left:721.36px;top:554.60px;width:7.94px;height:9.10px;background:rgb(187,187,188)"></div><div style="position:absolute;left:645.00px;top:563.40px;width:7.94px;height:5.90px;background:rgb(215,215,216)"></div><div style="position:absolute;left:652.64px;top:563.40px;width:7.94px;height:5.90px;background:rgb(233,233,234)"></div><div style="position:absolute;left:660.27px;top:563.40px;width:7.94px;height:5.90px;background:rgb(236,236,237)"></div><div style="position:absolute;left:667.91px;top:563.40px;width:7.94px;height:5.90px;background:rgb(219,219,220)"></div><div style="position:absolute;left:675.55px;top:563.40px;width:7.94px;height:5.90px;background:rgb(221,221,222)"></div><div style="position:absolute;left:683.18px;top:563.40px;width:7.94px;height:5.90px;background:rgb(238,238,239)"></div><div style="position:absolute;left:690.82px;top:563.40px;width:7.94px;height:5.90px;background:rgb(233,233,234)"></div><div style="position:absolute;left:698.45px;top:563.40px;width:7.94px;height:5.90px;background:rgb(231,231,232)"></div><div style="position:absolute;left:706.09px;top:563.40px;width:7.94px;height:5.90px;background:rgb(227,227,228)"></div><div style="position:absolute;left:713.73px;top:563.40px;width:7.94px;height:5.90px;background:rgb(227,227,228)"></div><div style="position:absolute;left:721.36px;top:563.40px;width:7.94px;height:5.90px;background:rgb(234,234,235)"></div><div style="position:absolute;left:729px;top:546.55px;height:22px;line-height:22px;font-size:15.4px;color:#606266;white-space:nowrap">工...</div><div style="position:absolute;left:790.8px;width:141.20000000000005px;text-align:left;top:546.55px;height:22px;line-height:22px;font-size:15.4px;color:#606266;white-space:nowrap;">青海省-海东市-...</div><div style="position:absolute;left:932px;width:155.5999999999999px;text-align:center;top:546.55px;height:22px;line-height:22px;font-size:15.4px;color:#f0202a;white-space:nowrap;">暂未配置</div><div style="position:absolute;left:1087.6px;width:154.4000000000001px;text-align:center;top:546.55px;height:22px;line-height:22px;font-size:15.4px;color:#606266;white-space:nowrap;"></div><div style="position:absolute;left:1242px;width:155.70000000000005px;text-align:center;top:546.55px;height:22px;line-height:22px;font-size:16px;color:#606266;white-space:nowrap;">110</div><div style="position:absolute;left:1397.7px;width:153.29999999999995px;text-align:center;top:546.55px;height:22px;line-height:22px;font-size:16px;color:#606266;white-space:nowrap;">110</div><div style="position:absolute;left:1551px;width:155px;text-align:center;top:546.55px;height:22px;line-height:22px;font-size:15.4px;color:#3d95f0;white-space:nowrap;">设置</div><div style="position:absolute;left:1767.9px;top:552.9499999999999px;width:7px;height:9px;border:2px solid #8c8c8c;background:#e9edf2"><div style="position:absolute;left:3px;top:1px;width:1px;height:7px;background:#c5cad0"></div></div><div style="position:absolute;left:254px;width:60px;text-align:center;top:609.8499999999999px;height:22px;line-height:22px;font-size:16px;color:#606266;white-space:nowrap;">68</div><div style="position:absolute;left:326px;top:609.8499999999999px;height:22px;line-height:22px;font-size:15.4px;color:#606266;white-space:nowrap">倔</div><div style="position:absolute;left:337.50px;top:613.00px;width:7.53px;height:5.06px;background:rgb(232,232,233)"></div><div style="position:absolute;left:344.73px;top:613.00px;width:7.53px;height:5.06px;background:rgb(238,238,239)"></div><div style="position:absolute;left:351.95px;top:613.00px;width:7.53px;height:5.06px;background:rgb(241,241,242)"></div><div style="position:absolute;left:359.18px;top:613.00px;width:7.53px;height:5.06px;background:rgb(222,222,223)"></div><div style="position:absolute;left:366.41px;top:613.00px;width:7.53px;height:5.06px;background:rgb(230,230,231)"></div><div style="position:absolute;left:373.64px;top:613.00px;width:7.53px;height:5.06px;background:rgb(226,226,227)"></div><div style="position:absolute;left:380.86px;top:613.00px;width:7.53px;height:5.06px;background:rgb(228,228,229)"></div><div style="position:absolute;left:388.09px;top:613.00px;width:7.53px;height:5.06px;background:rgb(230,230,231)"></div><div style="position:absolute;left:395.32px;top:613.00px;width:7.53px;height:5.06px;background:rgb(224,224,225)"></div><div style="position:absolute;left:402.55px;top:613.00px;width:7.53px;height:5.06px;background:rgb(228,228,229)"></div><div style="position:absolute;left:409.77px;top:613.00px;width:7.53px;height:5.06px;background:rgb(238,238,239)"></div><div style="position:absolute;left:337.50px;top:617.76px;width:7.53px;height:7.78px;background:rgb(189,189,190)"></div><div style="position:absolute;left:344.73px;top:617.76px;width:7.53px;height:7.78px;background:rgb(198,198,199)"></div><div style="position:absolute;left:351.95px;top:617.76px;width:7.53px;height:7.78px;background:rgb(218,218,219)"></div><div style="position:absolute;left:359.18px;top:617.76px;width:7.53px;height:7.78px;background:rgb(187,187,188)"></div><div style="position:absolute;left:366.41px;top:617.76px;width:7.53px;height:7.78px;background:rgb(219,219,220)"></div><div style="position:absolute;left:373.64px;top:617.76px;width:7.53px;height:7.78px;background:rgb(209,209,210)"></div><div style="position:absolute;left:380.86px;top:617.76px;width:7.53px;height:7.78px;background:rgb(215,215,216)"></div><div style="position:absolute;left:388.09px;top:617.76px;width:7.53px;height:7.78px;background:rgb(194,194,195)"></div><div style="position:absolute;left:395.32px;top:617.76px;width:7.53px;height:7.78px;background:rgb(208,208,209)"></div><div style="position:absolute;left:402.55px;top:617.76px;width:7.53px;height:7.78px;background:rgb(196,196,197)"></div><div style="position:absolute;left:409.77px;top:617.76px;width:7.53px;height:7.78px;background:rgb(188,188,189)"></div><div style="position:absolute;left:337.50px;top:625.24px;width:7.53px;height:5.06px;background:rgb(225,225,226)"></div><div style="position:absolute;left:344.73px;top:625.24px;width:7.53px;height:5.06px;background:rgb(233,233,234)"></div><div style="position:absolute;left:351.95px;top:625.24px;width:7.53px;height:5.06px;background:rgb(214,214,215)"></div><div style="position:absolute;left:359.18px;top:625.24px;width:7.53px;height:5.06px;background:rgb(226,226,227)"></div><div style="position:absolute;left:366.41px;top:625.24px;width:7.53px;height:5.06px;background:rgb(234,234,235)"></div><div style="position:absolute;left:373.64px;top:625.24px;width:7.53px;height:5.06px;background:rgb(232,232,233)"></div><div style="position:absolute;left:380.86px;top:625.24px;width:7.53px;height:5.06px;background:rgb(220,220,221)"></div><div style="position:absolute;left:388.09px;top:625.24px;width:7.53px;height:5.06px;background:rgb(218,218,219)"></div><div style="position:absolute;left:395.32px;top:625.24px;width:7.53px;height:5.06px;background:rgb(224,224,225)"></div><div style="position:absolute;left:402.55px;top:625.24px;width:7.53px;height:5.06px;background:rgb(227,227,228)"></div><div style="position:absolute;left:409.77px;top:625.24px;width:7.53px;height:5.06px;background:rgb(228,228,229)"></div><div style="position:absolute;left:417px;top:609.8499999999999px;height:22px;line-height:22px;font-size:15.4px;color:#606266;white-space:nowrap">拉...</div><div style="position:absolute;left:636px;top:609.8499999999999px;height:22px;line-height:22px;font-size:15.4px;color:#606266;white-space:nowrap">青</div><div style="position:absolute;left:645.00px;top:609.50px;width:7.72px;height:6.18px;background:rgb(230,230,231)"></div><div style="position:absolute;left:652.42px;top:609.50px;width:7.72px;height:6.18px;background:rgb(225,225,226)"></div><div style="position:absolute;left:659.85px;top:609.50px;width:7.72px;height:6.18px;background:rgb(238,238,239)"></div><div style="position:absolute;left:667.27px;top:609.50px;width:7.72px;height:6.18px;background:rgb(237,237,238)"></div><div style="position:absolute;left:674.69px;top:609.50px;width:7.72px;height:6.18px;background:rgb(240,240,241)"></div><div style="position:absolute;left:682.12px;top:609.50px;width:7.72px;height:6.18px;background:rgb(227,227,228)"></div><div style="position:absolute;left:689.54px;top:609.50px;width:7.72px;height:6.18px;background:rgb(236,236,237)"></div><div style="position:absolute;left:696.96px;top:609.50px;width:7.72px;height:6.18px;background:rgb(231,231,232)"></div><div style="position:absolute;left:704.38px;top:609.50px;width:7.72px;height:6.18px;background:rgb(240,240,241)"></div><div style="position:absolute;left:711.81px;top:609.50px;width:7.72px;height:6.18px;background:rgb(224,224,225)"></div><div style="position:absolute;left:719.23px;top:609.50px;width:7.72px;height:6.18px;background:rgb(237,237,238)"></div><div style="position:absolute;left:726.65px;top:609.50px;width:7.72px;height:6.18px;background:rgb(234,234,235)"></div><div style="position:absolute;left:734.08px;top:609.50px;width:7.72px;height:6.18px;background:rgb(238,238,239)"></div><div style="position:absolute;left:645.00px;top:615.38px;width:7.72px;height:9.54px;background:rgb(218,218,219)"></div><div style="position:absolute;left:652.42px;top:615.38px;width:7.72px;height:9.54px;background:rgb(198,198,199)"></div><div style="position:absolute;left:659.85px;top:615.38px;width:7.72px;height:9.54px;background:rgb(214,214,215)"></div><div style="position:absolute;left:667.27px;top:615.38px;width:7.72px;height:9.54px;background:rgb(193,193,194)"></div><div style="position:absolute;left:674.69px;top:615.38px;width:7.72px;height:9.54px;background:rgb(187,187,188)"></div><div style="position:absolute;left:682.12px;top:615.38px;width:7.72px;height:9.54px;background:rgb(202,202,203)"></div><div style="position:absolute;left:689.54px;top:615.38px;width:7.72px;height:9.54px;background:rgb(212,212,213)"></div><div style="position:absolute;left:696.96px;top:615.38px;width:7.72px;height:9.54px;background:rgb(187,187,188)"></div><div style="position:absolute;left:704.38px;top:615.38px;width:7.72px;height:9.54px;background:rgb(212,212,213)"></div><div style="position:absolute;left:711.81px;top:615.38px;width:7.72px;height:9.54px;background:rgb(208,208,209)"></div><div style="position:absolute;left:719.23px;top:615.38px;width:7.72px;height:9.54px;background:rgb(221,221,222)"></div><div style="position:absolute;left:726.65px;top:615.38px;width:7.72px;height:9.54px;background:rgb(213,213,214)"></div><div style="position:absolute;left:734.08px;top:615.38px;width:7.72px;height:9.54px;background:rgb(217,217,218)"></div><div style="position:absolute;left:645.00px;top:624.62px;width:7.72px;height:6.18px;background:rgb(231,231,232)"></div><div style="position:absolute;left:652.42px;top:624.62px;width:7.72px;height:6.18px;background:rgb(227,227,228)"></div><div style="position:absolute;left:659.85px;top:624.62px;width:7.72px;height:6.18px;background:rgb(219,219,220)"></div><div style="position:absolute;left:667.27px;top:624.62px;width:7.72px;height:6.18px;background:rgb(215,215,216)"></div><div style="position:absolute;left:674.69px;top:624.62px;width:7.72px;height:6.18px;background:rgb(222,222,223)"></div><div style="position:absolute;left:682.12px;top:624.62px;width:7.72px;height:6.18px;background:rgb(232,232,233)"></div><div style="position:absolute;left:689.54px;top:624.62px;width:7.72px;height:6.18px;background:rgb(233,233,234)"></div><div style="position:absolute;left:696.96px;top:624.62px;width:7.72px;height:6.18px;background:rgb(220,220,221)"></div><div style="position:absolute;left:704.38px;top:624.62px;width:7.72px;height:6.18px;background:rgb(236,236,237)"></div><div style="position:absolute;left:711.81px;top:624.62px;width:7.72px;height:6.18px;background:rgb(216,216,217)"></div><div style="position:absolute;left:719.23px;top:624.62px;width:7.72px;height:6.18px;background:rgb(228,228,229)"></div><div style="position:absolute;left:726.65px;top:624.62px;width:7.72px;height:6.18px;background:rgb(236,236,237)"></div><div style="position:absolute;left:734.08px;top:624.62px;width:7.72px;height:6.18px;background:rgb(225,225,226)"></div><div style="position:absolute;left:741.5px;top:609.8499999999999px;height:22px;line-height:22px;font-size:15.4px;color:#606266;white-space:nowrap">...</div><div style="position:absolute;left:790.8px;width:141.20000000000005px;text-align:left;top:609.8499999999999px;height:22px;line-height:22px;font-size:15.4px;color:#606266;white-space:nowrap;">青海省-海东市-...</div><div style="position:absolute;left:932px;width:155.5999999999999px;text-align:center;top:609.8499999999999px;height:22px;line-height:22px;font-size:15.4px;color:#606266;white-space:nowrap;">线上代发</div><div style="position:absolute;left:1087.6px;width:154.4000000000001px;text-align:center;top:609.8499999999999px;height:22px;line-height:22px;font-size:15.4px;color:#606266;white-space:nowrap;">海东市农商银行</div><div style="position:absolute;left:1242px;width:155.70000000000005px;text-align:center;top:609.8499999999999px;height:22px;line-height:22px;font-size:16px;color:#606266;white-space:nowrap;">24</div><div style="position:absolute;left:1397.7px;width:153.29999999999995px;text-align:center;top:609.8499999999999px;height:22px;line-height:22px;font-size:16px;color:#606266;white-space:nowrap;">9</div><div style="position:absolute;left:1551px;width:155px;text-align:center;top:609.8499999999999px;height:22px;line-height:22px;font-size:15.4px;color:#3d95f0;white-space:nowrap;">设置</div><div style="position:absolute;left:1767.9px;top:616.2499999999999px;width:7px;height:9px;border:2px solid #8c8c8c;background:#e9edf2"><div style="position:absolute;left:3px;top:1px;width:1px;height:7px;background:#c5cad0"></div></div><div style="position:absolute;left:254px;width:60px;text-align:center;top:673.15px;height:22px;line-height:22px;font-size:16px;color:#606266;white-space:nowrap;">69</div><div style="position:absolute;left:326px;top:673.15px;height:22px;line-height:22px;font-size:15.4px;color:#606266;white-space:nowrap">2</div><div style="position:absolute;left:335.00px;top:676.00px;width:7.57px;height:5.06px;background:rgb(238,238,239)"></div><div style="position:absolute;left:342.27px;top:676.00px;width:7.57px;height:5.06px;background:rgb(236,236,237)"></div><div style="position:absolute;left:349.54px;top:676.00px;width:7.57px;height:5.06px;background:rgb(232,232,233)"></div><div style="position:absolute;left:356.81px;top:676.00px;width:7.57px;height:5.06px;background:rgb(239,239,240)"></div><div style="position:absolute;left:364.08px;top:676.00px;width:7.57px;height:5.06px;background:rgb(239,239,240)"></div><div style="position:absolute;left:371.35px;top:676.00px;width:7.57px;height:5.06px;background:rgb(234,234,235)"></div><div style="position:absolute;left:378.62px;top:676.00px;width:7.57px;height:5.06px;background:rgb(237,237,238)"></div><div style="position:absolute;left:385.88px;top:676.00px;width:7.57px;height:5.06px;background:rgb(222,222,223)"></div><div style="position:absolute;left:393.15px;top:676.00px;width:7.57px;height:5.06px;background:rgb(227,227,228)"></div><div style="position:absolute;left:400.42px;top:676.00px;width:7.57px;height:5.06px;background:rgb(226,226,227)"></div><div style="position:absolute;left:407.69px;top:676.00px;width:7.57px;height:5.06px;background:rgb(236,236,237)"></div><div style="position:absolute;left:414.96px;top:676.00px;width:7.57px;height:5.06px;background:rgb(243,243,244)"></div><div style="position:absolute;left:422.23px;top:676.00px;width:7.57px;height:5.06px;background:rgb(241,241,242)"></div><div style="position:absolute;left:335.00px;top:680.76px;width:7.57px;height:7.78px;background:rgb(186,186,187)"></div><div style="position:absolute;left:342.27px;top:680.76px;width:7.57px;height:7.78px;background:rgb(206,206,207)"></div><div style="position:absolute;left:349.54px;top:680.76px;width:7.57px;height:7.78px;background:rgb(204,204,205)"></div><div style="position:absolute;left:356.81px;top:680.76px;width:7.57px;height:7.78px;background:rgb(208,208,209)"></div><div style="position:absolute;left:364.08px;top:680.76px;width:7.57px;height:7.78px;background:rgb(200,200,201)"></div><div style="position:absolute;left:371.35px;top:680.76px;width:7.57px;height:7.78px;background:rgb(205,205,206)"></div><div style="position:absolute;left:378.62px;top:680.76px;width:7.57px;height:7.78px;background:rgb(194,194,195)"></div><div style="position:absolute;left:385.88px;top:680.76px;width:7.57px;height:7.78px;background:rgb(190,190,191)"></div><div style="position:absolute;left:393.15px;top:680.76px;width:7.57px;height:7.78px;background:rgb(199,199,200)"></div><div style="position:absolute;left:400.42px;top:680.76px;width:7.57px;height:7.78px;background:rgb(218,218,219)"></div><div style="position:absolute;left:407.69px;top:680.76px;width:7.57px;height:7.78px;background:rgb(205,205,206)"></div><div style="position:absolute;left:414.96px;top:680.76px;width:7.57px;height:7.78px;background:rgb(221,221,222)"></div><div style="position:absolute;left:422.23px;top:680.76px;width:7.57px;height:7.78px;background:rgb(197,197,198)"></div><div style="position:absolute;left:335.00px;top:688.24px;width:7.57px;height:5.06px;background:rgb(238,238,239)"></div><div style="position:absolute;left:342.27px;top:688.24px;width:7.57px;height:5.06px;background:rgb(236,236,237)"></div><div style="position:absolute;left:349.54px;top:688.24px;width:7.57px;height:5.06px;background:rgb(224,224,225)"></div><div style="position:absolute;left:356.81px;top:688.24px;width:7.57px;height:5.06px;background:rgb(219,219,220)"></div><div style="position:absolute;left:364.08px;top:688.24px;width:7.57px;height:5.06px;background:rgb(226,226,227)"></div><div style="position:absolute;left:371.35px;top:688.24px;width:7.57px;height:5.06px;background:rgb(238,238,239)"></div><div style="position:absolute;left:378.62px;top:688.24px;width:7.57px;height:5.06px;background:rgb(221,221,222)"></div><div style="position:absolute;left:385.88px;top:688.24px;width:7.57px;height:5.06px;background:rgb(234,234,235)"></div><div style="position:absolute;left:393.15px;top:688.24px;width:7.57px;height:5.06px;background:rgb(228,228,229)"></div><div style="position:absolute;left:400.42px;top:688.24px;width:7.57px;height:5.06px;background:rgb(221,221,222)"></div><div style="position:absolute;left:407.69px;top:688.24px;width:7.57px;height:5.06px;background:rgb(236,236,237)"></div><div style="position:absolute;left:414.96px;top:688.24px;width:7.57px;height:5.06px;background:rgb(228,228,229)"></div><div style="position:absolute;left:422.23px;top:688.24px;width:7.57px;height:5.06px;background:rgb(214,214,215)"></div><div style="position:absolute;left:429px;top:673.15px;height:22px;line-height:22px;font-size:15.4px;color:#606266;white-space:nowrap">乐...</div><div style="position:absolute;left:636px;top:673.15px;height:22px;line-height:22px;font-size:15.4px;color:#606266;white-space:nowrap">四</div><div style="position:absolute;left:648.50px;top:678.50px;width:7.88px;height:4.22px;background:rgb(237,237,238)"></div><div style="position:absolute;left:656.08px;top:678.50px;width:7.88px;height:4.22px;background:rgb(236,236,237)"></div><div style="position:absolute;left:663.67px;top:678.50px;width:7.88px;height:4.22px;background:rgb(224,224,225)"></div><div style="position:absolute;left:671.25px;top:678.50px;width:7.88px;height:4.22px;background:rgb(226,226,227)"></div><div style="position:absolute;left:678.83px;top:678.50px;width:7.88px;height:4.22px;background:rgb(234,234,235)"></div><div style="position:absolute;left:686.42px;top:678.50px;width:7.88px;height:4.22px;background:rgb(223,223,224)"></div><div style="position:absolute;left:694.00px;top:678.50px;width:7.88px;height:4.22px;background:rgb(223,223,224)"></div><div style="position:absolute;left:701.58px;top:678.50px;width:7.88px;height:4.22px;background:rgb(242,242,243)"></div><div style="position:absolute;left:709.17px;top:678.50px;width:7.88px;height:4.22px;background:rgb(228,228,229)"></div><div style="position:absolute;left:716.75px;top:678.50px;width:7.88px;height:4.22px;background:rgb(228,228,229)"></div><div style="position:absolute;left:724.33px;top:678.50px;width:7.88px;height:4.22px;background:rgb(227,227,228)"></div><div style="position:absolute;left:731.92px;top:678.50px;width:7.88px;height:4.22px;background:rgb(231,231,232)"></div><div style="position:absolute;left:648.50px;top:682.42px;width:7.88px;height:6.46px;background:rgb(191,191,192)"></div><div style="position:absolute;left:656.08px;top:682.42px;width:7.88px;height:6.46px;background:rgb(189,189,190)"></div><div style="position:absolute;left:663.67px;top:682.42px;width:7.88px;height:6.46px;background:rgb(212,212,213)"></div><div style="position:absolute;left:671.25px;top:682.42px;width:7.88px;height:6.46px;background:rgb(195,195,196)"></div><div style="position:absolute;left:678.83px;top:682.42px;width:7.88px;height:6.46px;background:rgb(208,208,209)"></div><div style="position:absolute;left:686.42px;top:682.42px;width:7.88px;height:6.46px;background:rgb(205,205,206)"></div><div style="position:absolute;left:694.00px;top:682.42px;width:7.88px;height:6.46px;background:rgb(221,221,222)"></div><div style="position:absolute;left:701.58px;top:682.42px;width:7.88px;height:6.46px;background:rgb(198,198,199)"></div><div style="position:absolute;left:709.17px;top:682.42px;width:7.88px;height:6.46px;background:rgb(216,216,217)"></div><div style="position:absolute;left:716.75px;top:682.42px;width:7.88px;height:6.46px;background:rgb(200,200,201)"></div><div style="position:absolute;left:724.33px;top:682.42px;width:7.88px;height:6.46px;background:rgb(214,214,215)"></div><div style="position:absolute;left:731.92px;top:682.42px;width:7.88px;height:6.46px;background:rgb(196,196,197)"></div><div style="position:absolute;left:648.50px;top:688.58px;width:7.88px;height:4.22px;background:rgb(215,215,216)"></div><div style="position:absolute;left:656.08px;top:688.58px;width:7.88px;height:4.22px;background:rgb(214,214,215)"></div><div style="position:absolute;left:663.67px;top:688.58px;width:7.88px;height:4.22px;background:rgb(214,214,215)"></div><div style="position:absolute;left:671.25px;top:688.58px;width:7.88px;height:4.22px;background:rgb(238,238,239)"></div><div style="position:absolute;left:678.83px;top:688.58px;width:7.88px;height:4.22px;background:rgb(228,228,229)"></div><div style="position:absolute;left:686.42px;top:688.58px;width:7.88px;height:4.22px;background:rgb(225,225,226)"></div><div style="position:absolute;left:694.00px;top:688.58px;width:7.88px;height:4.22px;background:rgb(226,226,227)"></div><div style="position:absolute;left:701.58px;top:688.58px;width:7.88px;height:4.22px;background:rgb(232,232,233)"></div><div style="position:absolute;left:709.17px;top:688.58px;width:7.88px;height:4.22px;background:rgb(237,237,238)"></div><div style="position:absolute;left:716.75px;top:688.58px;width:7.88px;height:4.22px;background:rgb(219,219,220)"></div><div style="position:absolute;left:724.33px;top:688.58px;width:7.88px;height:4.22px;background:rgb(231,231,232)"></div><div style="position:absolute;left:731.92px;top:688.58px;width:7.88px;height:4.22px;background:rgb(224,224,225)"></div><div style="position:absolute;left:740px;top:673.15px;height:22px;line-height:22px;font-size:15.4px;color:#606266;white-space:nowrap">...</div><div style="position:absolute;left:790.8px;width:141.20000000000005px;text-align:left;top:673.15px;height:22px;line-height:22px;font-size:15.4px;color:#606266;white-space:nowrap;">青海省-海东市-...</div><div style="position:absolute;left:932px;width:155.5999999999999px;text-align:center;top:673.15px;height:22px;line-height:22px;font-size:15.4px;color:#606266;white-space:nowrap;">线上代发</div><div style="position:absolute;left:1087.6px;width:154.4000000000001px;text-align:center;top:673.15px;height:22px;line-height:22px;font-size:15.4px;color:#606266;white-space:nowrap;">招商银行</div><div style="position:absolute;left:1242px;width:155.70000000000005px;text-align:center;top:673.15px;height:22px;line-height:22px;font-size:16px;color:#606266;white-space:nowrap;">58</div><div style="position:absolute;left:1397.7px;width:153.29999999999995px;text-align:center;top:673.15px;height:22px;line-height:22px;font-size:16px;color:#606266;white-space:nowrap;">58</div><div style="position:absolute;left:1551px;width:155px;text-align:center;top:673.15px;height:22px;line-height:22px;font-size:15.4px;color:#3d95f0;white-space:nowrap;">设置</div><div style="position:absolute;left:1767.9px;top:679.55px;width:7px;height:9px;border:2px solid #8c8c8c;background:#e9edf2"><div style="position:absolute;left:3px;top:1px;width:1px;height:7px;background:#c5cad0"></div></div><div style="position:absolute;left:254px;width:60px;text-align:center;top:736.4499999999999px;height:22px;line-height:22px;font-size:16px;color:#606266;white-space:nowrap;">70</div><div style="position:absolute;left:326px;top:736.4499999999999px;height:22px;line-height:22px;font-size:15.4px;color:#606266;white-space:nowrap">海</div><div style="position:absolute;left:336.00px;top:737.00px;width:7.76px;height:6.18px;background:rgb(224,224,225)"></div><div style="position:absolute;left:343.46px;top:737.00px;width:7.76px;height:6.18px;background:rgb(240,240,241)"></div><div style="position:absolute;left:350.92px;top:737.00px;width:7.76px;height:6.18px;background:rgb(227,227,228)"></div><div style="position:absolute;left:358.38px;top:737.00px;width:7.76px;height:6.18px;background:rgb(243,243,244)"></div><div style="position:absolute;left:365.85px;top:737.00px;width:7.76px;height:6.18px;background:rgb(243,243,244)"></div><div style="position:absolute;left:373.31px;top:737.00px;width:7.76px;height:6.18px;background:rgb(227,227,228)"></div><div style="position:absolute;left:380.77px;top:737.00px;width:7.76px;height:6.18px;background:rgb(234,234,235)"></div><div style="position:absolute;left:388.23px;top:737.00px;width:7.76px;height:6.18px;background:rgb(236,236,237)"></div><div style="position:absolute;left:395.69px;top:737.00px;width:7.76px;height:6.18px;background:rgb(236,236,237)"></div><div style="position:absolute;left:403.15px;top:737.00px;width:7.76px;height:6.18px;background:rgb(236,236,237)"></div><div style="position:absolute;left:410.62px;top:737.00px;width:7.76px;height:6.18px;background:rgb(236,236,237)"></div><div style="position:absolute;left:418.08px;top:737.00px;width:7.76px;height:6.18px;background:rgb(230,230,231)"></div><div style="position:absolute;left:425.54px;top:737.00px;width:7.76px;height:6.18px;background:rgb(229,229,230)"></div><div style="position:absolute;left:336.00px;top:742.88px;width:7.76px;height:9.54px;background:rgb(198,198,199)"></div><div style="position:absolute;left:343.46px;top:742.88px;width:7.76px;height:9.54px;background:rgb(209,209,210)"></div><div style="position:absolute;left:350.92px;top:742.88px;width:7.76px;height:9.54px;background:rgb(217,217,218)"></div><div style="position:absolute;left:358.38px;top:742.88px;width:7.76px;height:9.54px;background:rgb(199,199,200)"></div><div style="position:absolute;left:365.85px;top:742.88px;width:7.76px;height:9.54px;background:rgb(199,199,200)"></div><div style="position:absolute;left:373.31px;top:742.88px;width:7.76px;height:9.54px;background:rgb(210,210,211)"></div><div style="position:absolute;left:380.77px;top:742.88px;width:7.76px;height:9.54px;background:rgb(191,191,192)"></div><div style="position:absolute;left:388.23px;top:742.88px;width:7.76px;height:9.54px;background:rgb(191,191,192)"></div><div style="position:absolute;left:395.69px;top:742.88px;width:7.76px;height:9.54px;background:rgb(214,214,215)"></div><div style="position:absolute;left:403.15px;top:742.88px;width:7.76px;height:9.54px;background:rgb(220,220,221)"></div><div style="position:absolute;left:410.62px;top:742.88px;width:7.76px;height:9.54px;background:rgb(205,205,206)"></div><div style="position:absolute;left:418.08px;top:742.88px;width:7.76px;height:9.54px;background:rgb(210,210,211)"></div><div style="position:absolute;left:425.54px;top:742.88px;width:7.76px;height:9.54px;background:rgb(221,221,222)"></div><div style="position:absolute;left:336.00px;top:752.12px;width:7.76px;height:6.18px;background:rgb(225,225,226)"></div><div style="position:absolute;left:343.46px;top:752.12px;width:7.76px;height:6.18px;background:rgb(226,226,227)"></div><div style="position:absolute;left:350.92px;top:752.12px;width:7.76px;height:6.18px;background:rgb(237,237,238)"></div><div style="position:absolute;left:358.38px;top:752.12px;width:7.76px;height:6.18px;background:rgb(234,234,235)"></div><div style="position:absolute;left:365.85px;top:752.12px;width:7.76px;height:6.18px;background:rgb(238,238,239)"></div><div style="position:absolute;left:373.31px;top:752.12px;width:7.76px;height:6.18px;background:rgb(236,236,237)"></div><div style="position:absolute;left:380.77px;top:752.12px;width:7.76px;height:6.18px;background:rgb(231,231,232)"></div><div style="position:absolute;left:388.23px;top:752.12px;width:7.76px;height:6.18px;background:rgb(227,227,228)"></div><div style="position:absolute;left:395.69px;top:752.12px;width:7.76px;height:6.18px;background:rgb(219,219,220)"></div><div style="position:absolute;left:403.15px;top:752.12px;width:7.76px;height:6.18px;background:rgb(224,224,225)"></div><div style="position:absolute;left:410.62px;top:752.12px;width:7.76px;height:6.18px;background:rgb(219,219,220)"></div><div style="position:absolute;left:418.08px;top:752.12px;width:7.76px;height:6.18px;background:rgb(226,226,227)"></div><div style="position:absolute;left:425.54px;top:752.12px;width:7.76px;height:6.18px;background:rgb(235,235,236)"></div><div style="position:absolute;left:433px;top:736.4499999999999px;height:22px;line-height:22px;font-size:15.4px;color:#606266;white-space:nowrap">...</div><div style="position:absolute;left:636.50px;top:739.00px;width:8.15px;height:4.50px;background:rgb(237,237,238)"></div><div style="position:absolute;left:644.35px;top:739.00px;width:8.15px;height:4.50px;background:rgb(240,240,241)"></div><div style="position:absolute;left:652.20px;top:739.00px;width:8.15px;height:4.50px;background:rgb(233,233,234)"></div><div style="position:absolute;left:660.05px;top:739.00px;width:8.15px;height:4.50px;background:rgb(225,225,226)"></div><div style="position:absolute;left:667.90px;top:739.00px;width:8.15px;height:4.50px;background:rgb(224,224,225)"></div><div style="position:absolute;left:675.75px;top:739.00px;width:8.15px;height:4.50px;background:rgb(233,233,234)"></div><div style="position:absolute;left:683.60px;top:739.00px;width:8.15px;height:4.50px;background:rgb(226,226,227)"></div><div style="position:absolute;left:691.45px;top:739.00px;width:8.15px;height:4.50px;background:rgb(227,227,228)"></div><div style="position:absolute;left:699.30px;top:739.00px;width:8.15px;height:4.50px;background:rgb(234,234,235)"></div><div style="position:absolute;left:707.15px;top:739.00px;width:8.15px;height:4.50px;background:rgb(225,225,226)"></div><div style="position:absolute;left:636.50px;top:743.20px;width:8.15px;height:6.90px;background:rgb(196,196,197)"></div><div style="position:absolute;left:644.35px;top:743.20px;width:8.15px;height:6.90px;background:rgb(188,188,189)"></div><div style="position:absolute;left:652.20px;top:743.20px;width:8.15px;height:6.90px;background:rgb(221,221,222)"></div><div style="position:absolute;left:660.05px;top:743.20px;width:8.15px;height:6.90px;background:rgb(193,193,194)"></div><div style="position:absolute;left:667.90px;top:743.20px;width:8.15px;height:6.90px;background:rgb(209,209,210)"></div><div style="position:absolute;left:675.75px;top:743.20px;width:8.15px;height:6.90px;background:rgb(211,211,212)"></div><div style="position:absolute;left:683.60px;top:743.20px;width:8.15px;height:6.90px;background:rgb(193,193,194)"></div><div style="position:absolute;left:691.45px;top:743.20px;width:8.15px;height:6.90px;background:rgb(190,190,191)"></div><div style="position:absolute;left:699.30px;top:743.20px;width:8.15px;height:6.90px;background:rgb(199,199,200)"></div><div style="position:absolute;left:707.15px;top:743.20px;width:8.15px;height:6.90px;background:rgb(200,200,201)"></div><div style="position:absolute;left:636.50px;top:749.80px;width:8.15px;height:4.50px;background:rgb(234,234,235)"></div><div style="position:absolute;left:644.35px;top:749.80px;width:8.15px;height:4.50px;background:rgb(229,229,230)"></div><div style="position:absolute;left:652.20px;top:749.80px;width:8.15px;height:4.50px;background:rgb(219,219,220)"></div><div style="position:absolute;left:660.05px;top:749.80px;width:8.15px;height:4.50px;background:rgb(232,232,233)"></div><div style="position:absolute;left:667.90px;top:749.80px;width:8.15px;height:4.50px;background:rgb(223,223,224)"></div><div style="position:absolute;left:675.75px;top:749.80px;width:8.15px;height:4.50px;background:rgb(233,233,234)"></div><div style="position:absolute;left:683.60px;top:749.80px;width:8.15px;height:4.50px;background:rgb(223,223,224)"></div><div style="position:absolute;left:691.45px;top:749.80px;width:8.15px;height:4.50px;background:rgb(224,224,225)"></div><div style="position:absolute;left:699.30px;top:749.80px;width:8.15px;height:4.50px;background:rgb(220,220,221)"></div><div style="position:absolute;left:707.15px;top:749.80px;width:8.15px;height:4.50px;background:rgb(238,238,239)"></div><div style="position:absolute;left:715px;top:736.4499999999999px;height:22px;line-height:22px;font-size:15.4px;color:#606266;white-space:nowrap">设工...</div><div style="position:absolute;left:790.8px;width:141.20000000000005px;text-align:left;top:736.4499999999999px;height:22px;line-height:22px;font-size:15.4px;color:#606266;white-space:nowrap;">青海省-海东市-...</div><div style="position:absolute;left:932px;width:155.5999999999999px;text-align:center;top:736.4499999999999px;height:22px;line-height:22px;font-size:15.4px;color:#606266;white-space:nowrap;">线上代发</div><div style="position:absolute;left:1087.6px;width:154.4000000000001px;text-align:center;top:736.4499999999999px;height:22px;line-height:22px;font-size:15.4px;color:#606266;white-space:nowrap;">中国建设银行</div><div style="position:absolute;left:1242px;width:155.70000000000005px;text-align:center;top:736.4499999999999px;height:22px;line-height:22px;font-size:16px;color:#606266;white-space:nowrap;">52</div><div style="position:absolute;left:1397.7px;width:153.29999999999995px;text-align:center;top:736.4499999999999px;height:22px;line-height:22px;font-size:16px;color:#606266;white-space:nowrap;">20</div><div style="position:absolute;left:1551px;width:155px;text-align:center;top:736.4499999999999px;height:22px;line-height:22px;font-size:15.4px;color:#3d95f0;white-space:nowrap;">设置</div><div style="position:absolute;left:1767.9px;top:742.8499999999999px;width:7px;height:9px;border:2px solid #8c8c8c;background:#e9edf2"><div style="position:absolute;left:3px;top:1px;width:1px;height:7px;background:#c5cad0"></div></div>
<div style="position:absolute;left:259.5px;top:848px;line-height:22px;font-size:14px;color:#909399;white-space:nowrap">共 779 条</div><div style="position:absolute;left:336px;top:845.4px;width:107px;height:28px;border:1px solid #e4e7ed;border-radius:3px"><div style="position:absolute;left:21px;top:3px;line-height:22px;font-size:14px;color:#606266">10条/页</div><svg style="position:absolute;left:90px;top:14px" width="10" height="6" viewBox="0 0 10 6"><path d="M1 1 L5 5 L9 1" stroke="#c0c4cc" stroke-width="1" fill="none"/></svg></div><div style="position:absolute;left:467px;top:845.7px;width:24px;height:28.5px;background:#f4f4f5"><svg style="position:absolute;left:7px;top:7.5px" width="9" height="14" viewBox="0 0 9 14"><path d="M7.5 1 L1.5 7 L7.5 13" stroke="#5a5d63" stroke-width="1.8" fill="none"/></svg></div><div style="position:absolute;left:502.5px;top:847.9px;width:24px;height:24px;background:#f4f4f5;text-align:center;line-height:24px;font-size:13px;font-weight:bold;color:#7a7d83">1</div><div style="position:absolute;left:538.5px;top:847.9px;width:24px;height:24px;background:#f4f4f5;text-align:center;line-height:24px;font-size:13px;font-weight:bold;color:#7a7d83">...</div><div style="position:absolute;left:574.5px;top:847.9px;width:24px;height:24px;background:#f4f4f5;text-align:center;line-height:24px;font-size:13px;font-weight:bold;color:#7a7d83">5</div><div style="position:absolute;left:610.5px;top:847.9px;width:24px;height:24px;background:#f4f4f5;text-align:center;line-height:24px;font-size:13px;font-weight:bold;color:#7a7d83">6</div><div style="position:absolute;left:646.5px;top:847.9px;width:22px;height:22px;border:1px solid #a9c8f0;border-radius:50%;background:#d6e7fc;text-align:center;line-height:22px;font-size:13px;font-weight:bold;font-style:italic;color:#6aa0e6">7</div><div style="position:absolute;left:682.5px;top:847.9px;width:24px;height:24px;background:#f4f4f5;text-align:center;line-height:24px;font-size:13px;font-weight:bold;color:#7a7d83">8</div><div style="position:absolute;left:718.5px;top:847.9px;width:24px;height:24px;background:#f4f4f5;text-align:center;line-height:24px;font-size:13px;font-weight:bold;color:#7a7d83">9</div><div style="position:absolute;left:754.5px;top:847.9px;width:24px;height:24px;background:#f4f4f5;text-align:center;line-height:24px;font-size:13px;font-weight:bold;color:#7a7d83">...</div><div style="position:absolute;left:790.5px;top:847.9px;width:24px;height:24px;background:#f4f4f5;text-align:center;line-height:24px;font-size:13px;font-weight:bold;color:#7a7d83">78</div><div style="position:absolute;left:826px;top:845.3px;width:24.5px;height:29.5px;background:#f4f4f5"><svg style="position:absolute;left:8px;top:8px" width="9" height="14" viewBox="0 0 9 14"><path d="M1.5 1 L7.5 7 L1.5 13" stroke="#5a5d63" stroke-width="1.8" fill="none"/></svg></div><div style="position:absolute;left:882.5px;top:849px;line-height:22px;font-size:14px;color:#909399">前往</div><div style="position:absolute;left:915.4px;top:845px;width:47px;height:28px;border:1px solid #e4e7ed;border-radius:4px;text-align:center;line-height:28px;font-size:15px;color:#606266">7</div><div style="position:absolute;left:969.3px;top:849px;line-height:22px;font-size:14px;color:#909399">页</div>
</body></html>
